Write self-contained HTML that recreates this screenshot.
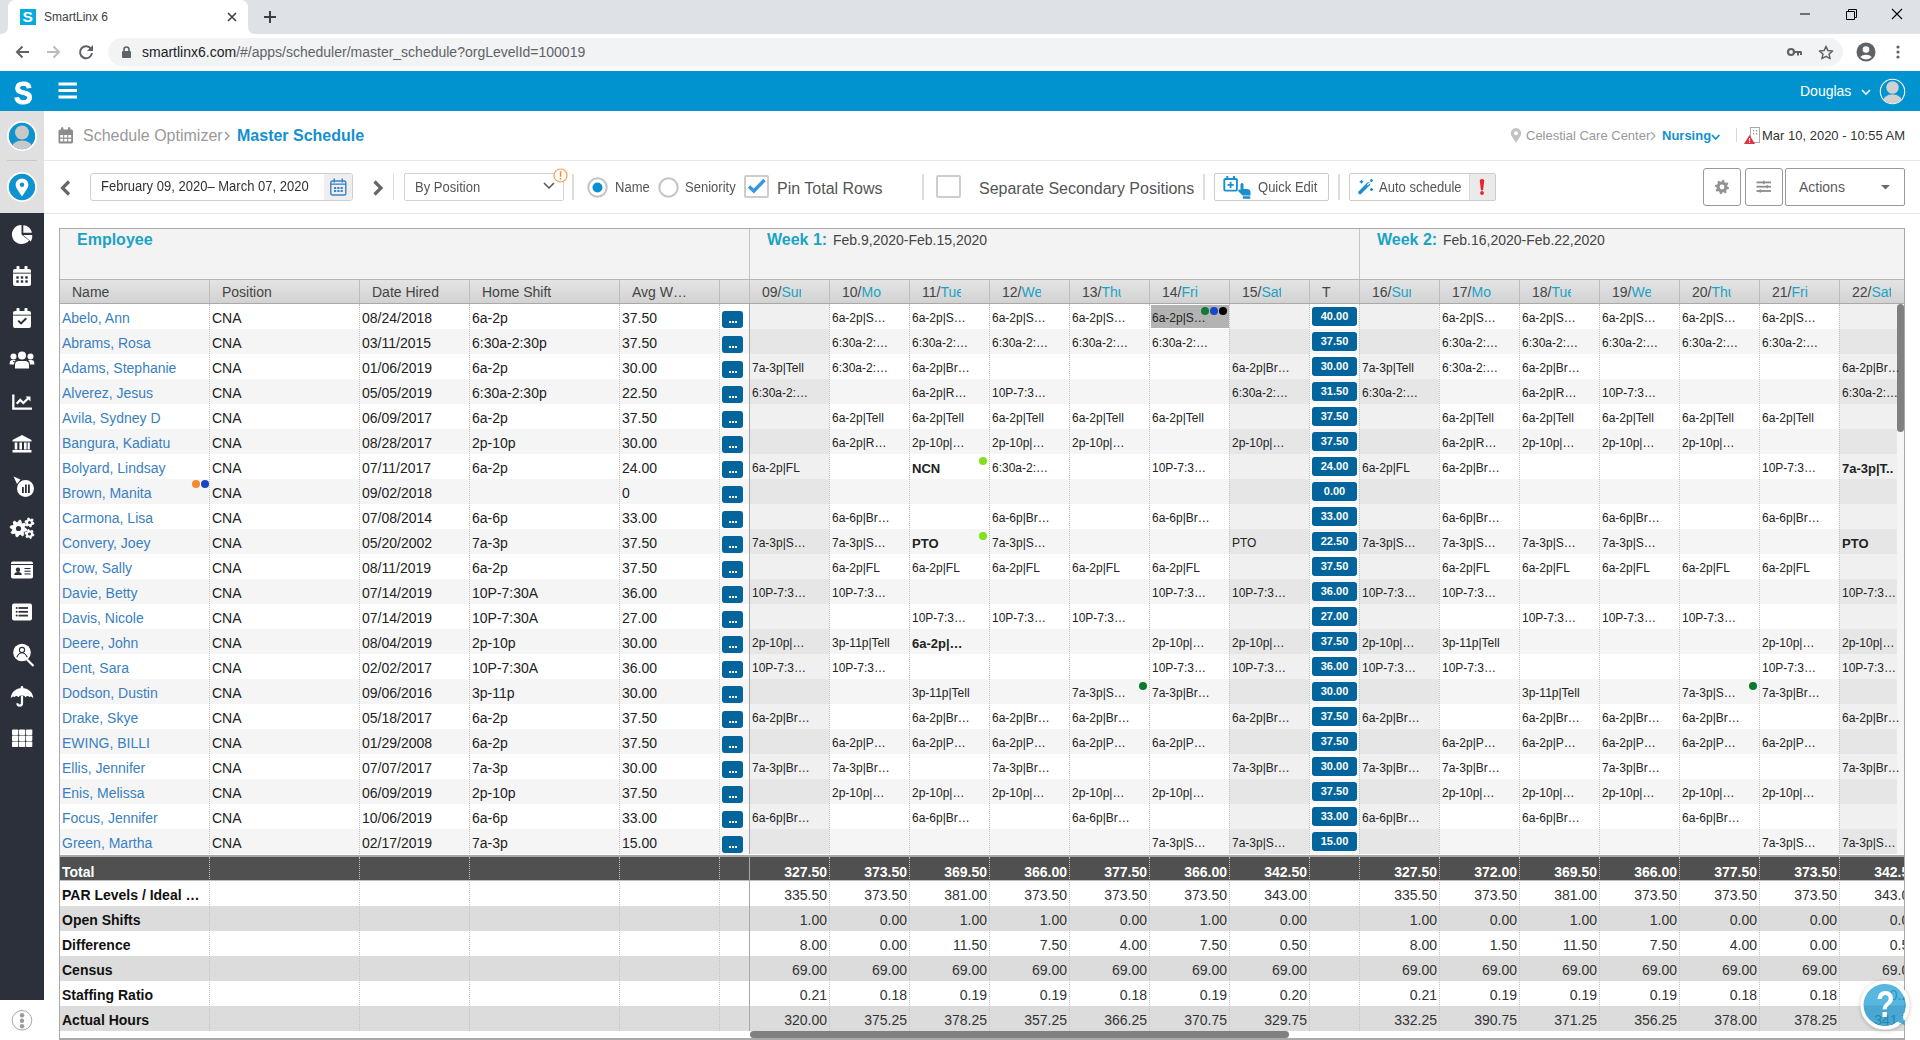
<!DOCTYPE html><html><head><meta charset="utf-8"><style>
*{box-sizing:border-box;margin:0;padding:0}
html,body{width:1920px;height:1040px;overflow:hidden;background:#fff;font-family:"Liberation Sans",sans-serif;color:#333;position:relative}
.a{position:absolute}
.t{position:absolute;white-space:nowrap;line-height:1}
svg{position:absolute;overflow:visible}
</style></head><body><div class="a" style="left:0;top:0;width:1920px;height:34px;background:#dee1e6"></div><svg style="left:0;top:0" width="260" height="34"><path d="M0 34 Q8 34 8 26 L8 8 Q8 0 16 0 L240 0 Q248 0 248 8 L248 26 Q248 34 256 34 Z" fill="#fff"/></svg><div class="a" style="left:20px;top:9px;width:16px;height:16px;background:#08abdf"></div><div class="t" style="left:22.5px;top:8.5px;font-size:15.5px;font-weight:bold;color:#fff">S</div><div class="t" style="left:44px;top:11px;font-size:12px;color:#3c4043">SmartLinx 6</div><svg style="left:228px;top:13px" width="8" height="8"><path d="M0 0L8 8M8 0L0 8" stroke="#3c4043" stroke-width="1.6"/></svg><svg style="left:264px;top:11px" width="12" height="12"><path d="M6 0V12M0 6H12" stroke="#3c4043" stroke-width="2"/></svg><svg style="left:1800px;top:13px" width="11" height="2"><path d="M0 1H10" stroke="#000" stroke-width="1"/></svg><svg style="left:1846px;top:9px" width="11" height="11"><path d="M0.5 2.5H8.5V10.5H0.5Z M2.5 2.5V0.5H10.5V8.5H8.5" fill="none" stroke="#000" stroke-width="1"/></svg><svg style="left:1892px;top:9px" width="11" height="11"><path d="M0 0L10 10M10 0L0 10" stroke="#000" stroke-width="1.1"/></svg><div class="a" style="left:0;top:34px;width:1920px;height:37px;background:#fff"></div><svg style="left:15px;top:45px" width="14" height="14"><path d="M14 7H2M7.5 1.5L2 7L7.5 12.5" fill="none" stroke="#5f6368" stroke-width="2"/></svg><svg style="left:47px;top:45px" width="14" height="14"><path d="M0 7H12M6.5 1.5L12 7L6.5 12.5" fill="none" stroke="#babcbe" stroke-width="2"/></svg><svg style="left:79px;top:45px" width="14" height="14"><path d="M12.2 4.2A6 6 0 1 0 13 8" fill="none" stroke="#5f6368" stroke-width="2"/><path d="M14 0V6H8Z" fill="#5f6368"/></svg><div class="a" style="left:108px;top:38px;width:1735px;height:28px;border-radius:14px;background:#f1f3f4"></div><svg style="left:122px;top:46px" width="9" height="12"><path d="M2 5V3.5A2.5 2.5 0 0 1 7 3.5V5" fill="none" stroke="#5f6368" stroke-width="1.6"/><rect x="0" y="5" width="9" height="7" rx="1" fill="#5f6368"/></svg><div class="t" style="left:142px;top:45px;font-size:14px;color:#202124">smartlinx6.com<span style="color:#5f6368">/#/apps/scheduler/master_schedule?orgLevelId=100019</span></div><svg style="left:1787px;top:47px" width="15" height="10"><circle cx="4" cy="5" r="3" fill="none" stroke="#5f6368" stroke-width="2.2"/><path d="M7 5H14.5M11 5V8.5M14 5V8" stroke="#5f6368" stroke-width="2"/></svg><svg style="left:1818px;top:45px" width="16" height="15"><path d="M8 1.2L9.9 5.6L14.6 6L11 9.1L12.1 13.7L8 11.3L3.9 13.7L5 9.1L1.4 6L6.1 5.6Z" fill="none" stroke="#5f6368" stroke-width="1.5" stroke-linejoin="round"/></svg><svg style="left:1856px;top:42px" width="20" height="20"><circle cx="10" cy="10" r="9.5" fill="#5f6368"/><circle cx="10" cy="7.5" r="3.3" fill="#fff"/><path d="M4.2 15A7 5 0 0 1 15.8 15A8 8 0 0 1 4.2 15Z" fill="#fff"/></svg><svg style="left:1896px;top:45px" width="4" height="14"><circle cx="2" cy="2" r="1.6" fill="#5f6368"/><circle cx="2" cy="7" r="1.6" fill="#5f6368"/><circle cx="2" cy="12" r="1.6" fill="#5f6368"/></svg><div class="a" style="left:0;top:71px;width:1920px;height:40px;background:#0093cf"></div><div class="t" style="left:13.8px;top:77.5px;font-size:31px;font-weight:bold;color:#fff;-webkit-text-stroke:0.9px #fff;transform:scaleX(0.9);transform-origin:0 0">S</div><svg style="left:58px;top:82px" width="20" height="17"><rect x="0.5" y="0.5" width="18.5" height="3" fill="#fff"/><rect x="0.5" y="7" width="18.5" height="3" fill="#fff"/><rect x="0.5" y="13.5" width="18.5" height="3" fill="#fff"/></svg><div class="t" style="left:1800px;top:84px;font-size:14px;color:#fff">Douglas</div><svg style="left:1861px;top:89px" width="10" height="7"><path d="M1 1L5 5L9 1" fill="none" stroke="#fff" stroke-width="1.6"/></svg><svg style="left:1879px;top:78px" width="27" height="27"><defs><clipPath id="avc"><circle cx="13.5" cy="13.5" r="12"/></clipPath></defs><circle cx="13.5" cy="13.5" r="12.2" fill="#0093cf" stroke="#fff" stroke-width="1.1"/><g clip-path="url(#avc)"><ellipse cx="13.5" cy="24.5" rx="10.5" ry="8.5" fill="#d0d0d0" stroke="#0093cf" stroke-width="0.7"/><circle cx="13.5" cy="9.5" r="6.3" fill="#d0d0d0"/></g></svg><div class="a" style="left:0;top:111px;width:44px;height:102px;background:#e0e0e0"></div><svg style="left:7px;top:121px" width="30" height="30"><defs><clipPath id="pc"><circle cx="15" cy="15" r="13.2"/></clipPath></defs><circle cx="15" cy="15" r="15" fill="#fff"/><circle cx="15" cy="15" r="13.2" fill="#0e93d1"/><g clip-path="url(#pc)"><ellipse cx="15" cy="28.5" rx="11.5" ry="9.5" fill="#c8c8c8" stroke="#0e93d1" stroke-width="0.8"/><circle cx="15" cy="11.5" r="7" fill="#c8c8c8"/></g></svg><div class="a" style="left:7px;top:160px;width:30px;height:1px;background:#c9c9c9"></div><svg style="left:7px;top:172px" width="30" height="30"><circle cx="15" cy="15" r="15" fill="#fff"/><circle cx="15" cy="15" r="13.2" fill="#0e93d1"/><path d="M15 24.5L9.6 16.3A6.4 6.4 0 1 1 20.4 16.3Z" fill="#fff"/><circle cx="15" cy="12.8" r="2.2" fill="#0e93d1"/></svg><div class="a" style="left:0;top:213px;width:44px;height:787px;background:#2b303b"></div><svg style="left:22px;top:234px" width="1" height="1"><path d="M-0.5 0.5L-0.5 -9.10A9.6 9.6 0 1 0 7.06 6.41Z" fill="#fff"/><path d="M1.3 -1.3L1.3 -8.80A9.0 9.0 0 0 1 9.90 -1.3Z" fill="#fff"/><path d="M1.2 0.9L10.20 0.9A9.2 9.2 0 0 1 8.85 7.51Z" fill="#fff"/></svg><svg style="left:22px;top:276px" width="1" height="1"><rect x="-9" y="-7" width="18" height="17" rx="2" fill="#fff"/><rect x="-5.5" y="-10" width="3" height="5" rx="0.8" fill="#fff"/><rect x="2.5" y="-10" width="3" height="5" rx="0.8" fill="#fff"/><rect x="-9" y="-3.3" width="18" height="0.9" fill="#2b303b"/><rect x="-5.7" y="0.3" width="2.4" height="2.4" fill="#2b303b"/><rect x="-1.2" y="0.3" width="2.4" height="2.4" fill="#2b303b"/><rect x="3.3" y="0.3" width="2.4" height="2.4" fill="#2b303b"/><rect x="-5.7" y="4.3" width="2.4" height="2.4" fill="#2b303b"/><rect x="-1.2" y="4.3" width="2.4" height="2.4" fill="#2b303b"/><rect x="3.3" y="4.3" width="2.4" height="2.4" fill="#2b303b"/></svg><svg style="left:22px;top:318px" width="1" height="1"><rect x="-9" y="-7" width="18" height="17" rx="2" fill="#fff"/><rect x="-5.5" y="-10" width="3" height="5" rx="0.8" fill="#fff"/><rect x="2.5" y="-10" width="3" height="5" rx="0.8" fill="#fff"/><rect x="-9" y="-3.3" width="18" height="0.9" fill="#2b303b"/><path d="M-3.8 2.6L-1 5.4L4.3 0.2" fill="none" stroke="#2b303b" stroke-width="2"/></svg><svg style="left:22px;top:360px" width="1" height="1"><circle cx="0" cy="-4.5" r="4" fill="#fff"/><circle cx="-8.5" cy="-3.5" r="3" fill="#fff"/><circle cx="8.5" cy="-3.5" r="3" fill="#fff"/><path d="M-7 8.5V5A4 4 0 0 1 -3 1H3A4 4 0 0 1 7 5V8.5Z" fill="#fff"/><path d="M-12.3 4.5V3A3 3 0 0 1 -9.3 0H-6.3A6 6 0 0 0 -8 4.5Z" fill="#fff"/><path d="M12.3 4.5V3A3 3 0 0 0 9.3 0H6.3A6 6 0 0 1 8 4.5Z" fill="#fff"/><path d="M-9 1.6L-7.4 1.6" stroke="#2b303b"/></svg><svg style="left:22px;top:402px" width="1" height="1"><path d="M-8.7 -7.5V6.6H10" fill="none" stroke="#fff" stroke-width="2.3"/><path d="M-5.3 1.8L-1.8 -2L1.3 1L6.5 -4" fill="none" stroke="#fff" stroke-width="2.3"/><path d="M3.5 -5.5H8.5V-0.5Z" fill="#fff"/></svg><svg style="left:22px;top:444px" width="1" height="1"><path d="M-9.5 -4L0 -9L9.5 -4V-2.5H-9.5Z" fill="#fff"/><rect x="-7.3" y="-1.5" width="2.6" height="7" fill="#fff"/><rect x="-2.6" y="-1.5" width="2.6" height="7" fill="#fff"/><rect x="2" y="-1.5" width="2.6" height="7" fill="#fff"/><rect x="5.6" y="-1.5" width="2.2" height="7" fill="#fff"/><rect x="-9.5" y="6" width="19" height="2.5" rx="0.5" fill="#fff"/></svg><svg style="left:22px;top:486px" width="1" height="1"><circle cx="3.5" cy="2.5" r="8.5" fill="#fff"/><rect x="0" y="1" width="1.8" height="6" fill="#2b303b"/><rect x="3" y="-1.5" width="1.8" height="8.5" fill="#2b303b"/><rect x="6" y="-1.5" width="1.8" height="8.5" fill="#2b303b"/><path d="M-8.5 -9.5L-1.5 -6.5L-5 -2Z" fill="#fff"/></svg><svg style="left:22px;top:528px" width="1" height="1"><polygon points="4.86,1.32 4.54,2.94 1.97,3.42 1.29,4.43 1.83,6.99 0.46,7.91 -1.70,6.43 -2.89,6.67 -4.32,8.86 -5.94,8.54 -6.42,5.97 -7.43,5.29 -9.99,5.83 -10.91,4.46 -9.43,2.30 -9.67,1.11 -11.86,-0.32 -11.54,-1.94 -8.97,-2.42 -8.29,-3.43 -8.83,-5.99 -7.46,-6.91 -5.30,-5.43 -4.11,-5.67 -2.68,-7.86 -1.06,-7.54 -0.58,-4.97 0.43,-4.29 2.99,-4.83 3.91,-3.46 2.43,-1.30 2.67,-0.11" fill="#fff" stroke="#fff" stroke-width="0.8" stroke-linejoin="round"/><circle cx="-3.5" cy="0.5" r="2.6" fill="#2b303b"/><polygon points="12.06,-4.90 11.75,-3.74 10.12,-3.49 9.51,-2.88 9.26,-1.25 8.10,-0.94 7.07,-2.23 6.24,-2.45 4.70,-1.85 3.85,-2.70 4.45,-4.24 4.23,-5.07 2.94,-6.10 3.25,-7.26 4.88,-7.51 5.49,-8.12 5.74,-9.75 6.90,-10.06 7.93,-8.77 8.76,-8.55 10.30,-9.15 11.15,-8.30 10.55,-6.76 10.77,-5.93" fill="#fff" stroke="#fff" stroke-width="0.8" stroke-linejoin="round"/><circle cx="7.5" cy="-5.5" r="1.5" fill="#2b303b"/><polygon points="12.06,6.60 11.75,7.76 10.12,8.01 9.51,8.62 9.26,10.25 8.10,10.56 7.07,9.27 6.24,9.05 4.70,9.65 3.85,8.80 4.45,7.26 4.23,6.43 2.94,5.40 3.25,4.24 4.88,3.99 5.49,3.38 5.74,1.75 6.90,1.44 7.93,2.73 8.76,2.95 10.30,2.35 11.15,3.20 10.55,4.74 10.77,5.57" fill="#fff" stroke="#fff" stroke-width="0.8" stroke-linejoin="round"/><circle cx="7.5" cy="6" r="1.5" fill="#2b303b"/></svg><svg style="left:22px;top:570px" width="1" height="1"><rect x="-11" y="-8.5" width="22" height="17" rx="1.8" fill="#fff"/><rect x="-11" y="-6" width="22" height="1" fill="#2b303b"/><circle cx="-4" cy="-0.3" r="2.2" fill="#2b303b"/><path d="M-7.8 5A3.8 3 0 0 1 -0.2 5Z" fill="#2b303b"/><rect x="2.5" y="-2" width="6" height="1.1" fill="#2b303b"/><rect x="2.5" y="0.7" width="6" height="1.1" fill="#2b303b"/><rect x="2.5" y="3.4" width="6" height="1.1" fill="#2b303b"/></svg><svg style="left:22px;top:612px" width="1" height="1"><rect x="-10" y="-8.5" width="20" height="17" rx="2" fill="#fff"/><circle cx="-5.3" cy="-4.0" r="1" fill="#2b303b"/><rect x="-3.5" y="-4.9" width="9.5" height="1.8" fill="#2b303b"/><circle cx="-5.3" cy="-0.2" r="1" fill="#2b303b"/><rect x="-3.5" y="-1.1" width="9.5" height="1.8" fill="#2b303b"/><circle cx="-5.3" cy="3.6" r="1" fill="#2b303b"/><rect x="-3.5" y="2.7" width="9.5" height="1.8" fill="#2b303b"/></svg><svg style="left:22px;top:654px" width="1" height="1"><circle cx="0" cy="-1.5" r="8.8" fill="#fff"/><circle cx="0" cy="-4" r="2.6" fill="none" stroke="#2b303b" stroke-width="1.1"/><path d="M-5.3 3.3Q-3 -1.2 0 -1.2Q3 -1.2 5.3 3.3" fill="none" stroke="#2b303b" stroke-width="1.1"/><path d="M5 5.5L11.5 12" stroke="#fff" stroke-width="2.2"/></svg><svg style="left:22px;top:696px" width="1" height="1"><path d="M-11.2 2.5A11.2 10.5 0 0 1 11.2 2.5Q9.5 -0.5 7.5 1Q5.5 -1 3.7 1.2Q2 -1.3 0 -0.3Q-2 -1.3 -3.7 1.2Q-5.5 -1 -7.5 1Q-9.5 -0.5 -11.2 2.5Z" fill="#fff"/><path d="M0 0V7.3A2.3 2.3 0 0 1 -4.6 7.3" fill="none" stroke="#fff" stroke-width="2.2"/><circle cx="0" cy="-8.6" r="1.3" fill="#fff"/></svg><svg style="left:22px;top:738px" width="1" height="1"><rect x="-10" y="-8.5" width="6.3" height="5.5" rx="0.8" fill="#fff"/><rect x="-3" y="-8.5" width="6.3" height="5.5" rx="0.8" fill="#fff"/><rect x="4" y="-8.5" width="6.3" height="5.5" rx="0.8" fill="#fff"/><rect x="-10" y="-2.5" width="6.3" height="5.5" rx="0.8" fill="#fff"/><rect x="-3" y="-2.5" width="6.3" height="5.5" rx="0.8" fill="#fff"/><rect x="4" y="-2.5" width="6.3" height="5.5" rx="0.8" fill="#fff"/><rect x="-10" y="3.5" width="6.3" height="5.5" rx="0.8" fill="#fff"/><rect x="-3" y="3.5" width="6.3" height="5.5" rx="0.8" fill="#fff"/><rect x="4" y="3.5" width="6.3" height="5.5" rx="0.8" fill="#fff"/></svg><svg style="left:11px;top:1009px" width="22" height="22"><circle cx="11" cy="11.3" r="9.8" fill="#fff" stroke="#a9a9a9" stroke-width="1"/><circle cx="11" cy="6.3" r="2.2" fill="#9c9c9c"/><circle cx="11" cy="11.8" r="2.2" fill="#9c9c9c"/><circle cx="11" cy="17.3" r="2.2" fill="#9c9c9c"/></svg><svg style="left:58px;top:127px" width="16" height="17"><rect x="0.5" y="2.5" width="14.5" height="14" rx="1.5" fill="#8c8c8c"/><rect x="3" y="0.3" width="2.4" height="4" rx="0.6" fill="#8c8c8c"/><rect x="10" y="0.3" width="2.4" height="4" rx="0.6" fill="#8c8c8c"/><rect x="2.2" y="8.0" width="3" height="2.6" fill="#fff"/><rect x="6.2" y="8.0" width="3" height="2.6" fill="#fff"/><rect x="10.2" y="8.0" width="3" height="2.6" fill="#fff"/><rect x="2.2" y="11.8" width="3" height="2.6" fill="#fff"/><rect x="6.2" y="11.8" width="3" height="2.6" fill="#fff"/><rect x="10.2" y="11.8" width="3" height="2.6" fill="#fff"/></svg><div class="t" style="left:83px;top:128px;font-size:16px;color:#999">Schedule Optimizer</div><svg style="left:224px;top:131px" width="7" height="10"><path d="M1 1L5 5L1 9" fill="none" stroke="#999" stroke-width="1.4"/></svg><div class="t" style="left:237px;top:128px;font-size:16px;font-weight:bold;color:#1490d0">Master Schedule</div><svg style="left:1510px;top:128px" width="12" height="15"><path d="M6 15L1.3 7.5A5.2 5.2 0 1 1 10.7 7.5Z" fill="#c2c2c2"/><circle cx="6" cy="5.3" r="2" fill="#fff"/></svg><div class="t" style="left:1526px;top:129px;font-size:13px;color:#999">Celestial Care Center</div><svg style="left:1650px;top:131px" width="7" height="10"><path d="M1 1L5 5L1 9" fill="none" stroke="#aaa" stroke-width="1.3"/></svg><div class="t" style="left:1662px;top:129px;font-size:13px;font-weight:bold;color:#1490d0">Nursing</div><svg style="left:1711px;top:134px" width="10" height="7"><path d="M1 1L4.7 5L8.4 1" fill="none" stroke="#1490d0" stroke-width="1.8"/></svg><div class="a" style="left:1736px;top:128px;width:1px;height:14px;background:#d8d8d8"></div><svg style="left:1744px;top:127px" width="18" height="18"><rect x="6.5" y="0.5" width="9" height="15" fill="#fff" stroke="#aaa" stroke-width="1"/><rect x="9" y="3" width="1.2" height="1.5" fill="#999"/><rect x="12" y="3" width="1.2" height="1.5" fill="#999"/><rect x="9" y="6" width="1.2" height="1.5" fill="#999"/><rect x="12" y="6" width="1.2" height="1.5" fill="#999"/><path d="M5.5 8L11 17H0Z" fill="#e0353f"/><rect x="5" y="11" width="1.1" height="3.2" fill="#fff"/><rect x="5" y="14.8" width="1.1" height="1.1" fill="#fff"/></svg><div class="t" style="left:1762px;top:129px;font-size:13px;color:#333">Mar 10, 2020 - 10:55 AM</div><div class="a" style="left:44px;top:160px;width:1876px;height:1px;background:#e6e6e6"></div><div class="a" style="left:44px;top:213px;width:1876px;height:1px;background:#e6e6e6"></div><svg style="left:59px;top:180px" width="13" height="16"><path d="M10 1.5L3.5 8L10 14.5" fill="none" stroke="#666" stroke-width="3.2"/></svg><svg style="left:372px;top:180px" width="13" height="16"><path d="M2.5 1.5L9 8L2.5 14.5" fill="none" stroke="#666" stroke-width="3.2"/></svg><div class="a" style="left:90px;top:173px;width:263px;height:28px;border:1px solid #cfcfcf;border-radius:3px;background:#fff"></div><div class="a" style="left:324px;top:174px;width:28px;height:26px;background:#eee;border-radius:0 2px 2px 0"></div><svg style="left:330px;top:178px" width="17" height="18"><rect x="0.8" y="3" width="15" height="14" rx="1.5" fill="none" stroke="#3b82c8" stroke-width="1.4"/><rect x="3.5" y="0.5" width="1.5" height="4" fill="#3b82c8"/><rect x="11.5" y="0.5" width="1.5" height="4" fill="#3b82c8"/><rect x="0.8" y="5.5" width="15" height="1.3" fill="#3b82c8"/><rect x="4.0" y="9.0" width="2.2" height="2" fill="#3b82c8"/><rect x="7.3" y="9.0" width="2.2" height="2" fill="#3b82c8"/><rect x="10.6" y="9.0" width="2.2" height="2" fill="#3b82c8"/><rect x="4.0" y="12.0" width="2.2" height="2" fill="#3b82c8"/><rect x="7.3" y="12.0" width="2.2" height="2" fill="#3b82c8"/><rect x="10.6" y="12.0" width="2.2" height="2" fill="#3b82c8"/></svg><div class="t" style="left:101px;top:179px;font-size:14px;color:#333;transform:scaleX(0.93);transform-origin:0 0">February 09, 2020– March 07, 2020</div><div class="a" style="left:393px;top:174px;width:1px;height:26px;background:#ddd"></div><div class="a" style="left:404px;top:173px;width:160px;height:28px;border:1px solid #d3d3d3;border-radius:2px;background:#fff"></div><div class="t" style="left:415px;top:180px;font-size:14px;color:#555;transform:scaleX(0.93);transform-origin:0 0">By Position</div><svg style="left:543px;top:182px" width="12" height="8"><path d="M1 1L6 6L11 1" fill="none" stroke="#555" stroke-width="1.5"/></svg><svg style="left:553px;top:168px" width="15" height="15"><circle cx="7.5" cy="7.5" r="6.5" fill="#fff" stroke="#f5a04a" stroke-width="1.2"/><rect x="6.8" y="3.3" width="1.5" height="5.5" fill="#f08a24"/><rect x="6.8" y="10" width="1.5" height="1.5" fill="#f08a24"/></svg><div class="a" style="left:572px;top:174px;width:2px;height:26px;background:#ddd"></div><svg style="left:587px;top:177px" width="21" height="21"><circle cx="10.5" cy="10.5" r="9.2" fill="#fff" stroke="#c4c4c4" stroke-width="2"/><circle cx="10.5" cy="10.5" r="5" fill="#0a8fd0"/></svg><div class="t" style="left:615px;top:180px;font-size:14px;color:#555;transform:scaleX(0.93);transform-origin:0 0">Name</div><svg style="left:658px;top:177px" width="21" height="21"><circle cx="10.5" cy="10.5" r="9.2" fill="#fff" stroke="#c4c4c4" stroke-width="2"/></svg><div class="t" style="left:685px;top:180px;font-size:14px;color:#555;transform:scaleX(0.93);transform-origin:0 0">Seniority</div><div class="a" style="left:744px;top:175px;width:25px;height:23px;border:2px solid #cdcdcd;border-radius:2px;background:#fff"></div><svg style="left:747px;top:178px" width="20" height="16"><path d="M2 8.5L6.8 13L17.5 2" fill="none" stroke="#3a96de" stroke-width="3.4"/></svg><div class="t" style="left:777px;top:181px;font-size:16px;color:#555">Pin Total Rows</div><div class="a" style="left:922px;top:174px;width:2px;height:26px;background:#ddd"></div><div class="a" style="left:936px;top:175px;width:25px;height:23px;border:2px solid #cdcdcd;border-radius:2px;background:#fff"></div><div class="t" style="left:979px;top:181px;font-size:16px;color:#555">Separate Secondary Positions</div><div class="a" style="left:1203px;top:174px;width:2px;height:26px;background:#ddd"></div><div class="a" style="left:1214px;top:173px;width:115px;height:28px;border:1px solid #ccc;border-radius:2px;background:#fff"></div><svg style="left:1222px;top:175px" width="32" height="24"><rect x="2.3" y="4" width="12.6" height="11.6" rx="1" fill="none" stroke="#1a8fd0" stroke-width="1.9"/><rect x="4.3" y="1" width="2" height="4" fill="#1a8fd0"/><rect x="11" y="1" width="2" height="4" fill="#1a8fd0"/><path d="M8.6 6.8V13M5.5 9.9H11.7" stroke="#1a8fd0" stroke-width="1.8"/><path d="M18.5 9.5Q18.5 8 20 8Q21.5 8 21.5 9.5V14H25Q28.5 14 28.5 17.5V20.5H20.5L16.5 16.5Q15.8 15.5 16.8 14.8Q17.6 14.3 18.5 15Z" fill="#1a8fd0"/><rect x="20.8" y="21.2" width="7.5" height="2.6" rx="0.5" fill="#1a8fd0"/></svg><div class="t" style="left:1258px;top:180px;font-size:14px;color:#555;transform:scaleX(0.93);transform-origin:0 0">Quick Edit</div><div class="a" style="left:1338px;top:174px;width:2px;height:26px;background:#ddd"></div><div class="a" style="left:1349px;top:173px;width:147px;height:28px;border:1px solid #ccc;border-radius:2px;background:#fff"></div><div class="a" style="left:1469px;top:174px;width:26px;height:26px;background:#eaeaea;border-left:1px solid #d8d8d8"></div><svg style="left:1357px;top:178px" width="18" height="18"><path d="M3 14.5L11.5 6" stroke="#1a8fd0" stroke-width="3.6" stroke-linecap="round"/><path d="M10.3 7.2L12.8 4.7" stroke="#fff" stroke-width="1.2"/><path d="M4.5 2V5.5M2.75 3.75H6.25M14.5 1V4M13 2.5H16M14.5 10V13M13 11.5H16" stroke="#1a8fd0" stroke-width="1.3"/></svg><div class="t" style="left:1379px;top:180px;font-size:14px;color:#555;transform:scaleX(0.93);transform-origin:0 0">Auto schedule</div><svg style="left:1478px;top:178px" width="8" height="18"><path d="M1.8 2.5Q1.8 1 4 1Q6.2 1 6.2 2.5L5.2 11.5Q5 12.5 4 12.5Q3 12.5 2.8 11.5Z" fill="#e8232f"/><circle cx="4" cy="15" r="1.9" fill="#e8232f"/></svg><div class="a" style="left:1703px;top:168px;width:38px;height:38px;border:1px solid #999;border-radius:3px;background:#fff"></div><svg style="left:1714px;top:179px" width="16" height="16"><polygon points="15.17,8.71 14.89,10.09 12.76,10.55 12.17,11.43 12.57,13.57 11.39,14.35 9.57,13.17 8.53,13.37 7.29,15.17 5.91,14.89 5.45,12.76 4.57,12.17 2.43,12.57 1.65,11.39 2.83,9.57 2.63,8.53 0.83,7.29 1.11,5.91 3.24,5.45 3.83,4.57 3.43,2.43 4.61,1.65 6.43,2.83 7.47,2.63 8.71,0.83 10.09,1.11 10.55,3.24 11.43,3.83 13.57,3.43 14.35,4.61 13.17,6.43 13.37,7.47" fill="#929292"/><circle cx="8" cy="8" r="2.4" fill="#fff"/></svg><div class="a" style="left:1745px;top:168px;width:38px;height:38px;border:1px solid #999;border-radius:3px;background:#fff"></div><svg style="left:1756px;top:180px" width="16" height="14"><rect x="0.5" y="1.5" width="14.5" height="1.8" fill="#8c8c8c"/><rect x="0.5" y="5.8" width="14.5" height="1.8" fill="#8c8c8c"/><rect x="0.5" y="10.1" width="14.5" height="1.8" fill="#8c8c8c"/><rect x="7" y="0.6" width="1.6" height="3.6" rx="0.8" fill="#8c8c8c"/><rect x="10.5" y="4.9" width="1.6" height="3.6" rx="0.8" fill="#8c8c8c"/><rect x="3.5" y="9.2" width="1.6" height="3.6" rx="0.8" fill="#8c8c8c"/></svg><div class="a" style="left:1785px;top:168px;width:120px;height:38px;border:1px solid #999;border-radius:2px;background:#fff"></div><div class="t" style="left:1799px;top:180px;font-size:14px;color:#5a5a5a">Actions</div><svg style="left:1881px;top:185px" width="9" height="5"><path d="M0 0H9L4.5 4.5Z" fill="#6a6a6a"/></svg><div class="a" style="left:59px;top:228px;width:1846px;height:812px;overflow:hidden;border:1px solid #aaa;border-bottom-width:2px;background:#fff"><div class="a" style="left:-1px;top:-1px;width:1846px;height:51px;background:#f3f3f3"></div><div class="a" style="left:-1px;top:50px;width:1846px;height:1px;background:#b4b4b4"></div><div class="a" style="left:689px;top:-1px;width:1px;height:51px;background:#c4c4c4"></div><div class="a" style="left:1299px;top:-1px;width:1px;height:51px;background:#c4c4c4"></div><div class="t" style="left:17px;top:3px;font-size:16px;font-weight:bold;color:#1ba3c4">Employee</div><div class="t" style="left:707px;top:3px;font-size:16px;font-weight:bold;color:#1ba3c4">Week 1:</div><div class="t" style="left:773px;top:4px;font-size:14px;color:#444">Feb.9,2020-Feb.15,2020</div><div class="t" style="left:1317px;top:3px;font-size:16px;font-weight:bold;color:#1ba3c4">Week 2:</div><div class="t" style="left:1383px;top:4px;font-size:14px;color:#444">Feb.16,2020-Feb.22,2020</div><div class="a" style="left:-1px;top:51px;width:1846px;height:23px;background:linear-gradient(#e4e4e4,#d2d2d2)"></div><div class="a" style="left:-1px;top:74px;width:1846px;height:1px;background:#a9a9a9"></div><div class="a" style="left:149px;top:51px;width:1px;height:23px;background:#bdbdbd"></div><div class="a" style="left:299px;top:51px;width:1px;height:23px;background:#bdbdbd"></div><div class="a" style="left:409px;top:51px;width:1px;height:23px;background:#bdbdbd"></div><div class="a" style="left:559px;top:51px;width:1px;height:23px;background:#bdbdbd"></div><div class="a" style="left:659px;top:51px;width:1px;height:23px;background:#bdbdbd"></div><div class="a" style="left:689px;top:51px;width:1px;height:23px;background:#bdbdbd"></div><div class="a" style="left:769px;top:51px;width:1px;height:23px;background:#bdbdbd"></div><div class="a" style="left:849px;top:51px;width:1px;height:23px;background:#bdbdbd"></div><div class="a" style="left:929px;top:51px;width:1px;height:23px;background:#bdbdbd"></div><div class="a" style="left:1009px;top:51px;width:1px;height:23px;background:#bdbdbd"></div><div class="a" style="left:1089px;top:51px;width:1px;height:23px;background:#bdbdbd"></div><div class="a" style="left:1169px;top:51px;width:1px;height:23px;background:#bdbdbd"></div><div class="a" style="left:1249px;top:51px;width:1px;height:23px;background:#bdbdbd"></div><div class="a" style="left:1299px;top:51px;width:1px;height:23px;background:#bdbdbd"></div><div class="a" style="left:1379px;top:51px;width:1px;height:23px;background:#bdbdbd"></div><div class="a" style="left:1459px;top:51px;width:1px;height:23px;background:#bdbdbd"></div><div class="a" style="left:1539px;top:51px;width:1px;height:23px;background:#bdbdbd"></div><div class="a" style="left:1619px;top:51px;width:1px;height:23px;background:#bdbdbd"></div><div class="a" style="left:1699px;top:51px;width:1px;height:23px;background:#bdbdbd"></div><div class="a" style="left:1779px;top:51px;width:1px;height:23px;background:#bdbdbd"></div><div class="a" style="left:1859px;top:51px;width:1px;height:23px;background:#bdbdbd"></div><div class="t" style="left:12px;top:56px;font-size:14px;color:#444">Name</div><div class="t" style="left:162px;top:56px;font-size:14px;color:#444">Position</div><div class="t" style="left:312px;top:56px;font-size:14px;color:#444">Date Hired</div><div class="t" style="left:422px;top:56px;font-size:14px;color:#444">Home Shift</div><div class="t" style="left:572px;top:56px;font-size:14px;color:#444">Avg W…</div><div class="t" style="left:702px;top:56px;width:39px;overflow:hidden;font-size:14px;color:#444">09/<span style="color:#1ba3c4">Sun</span></div><div class="t" style="left:782px;top:56px;width:39px;overflow:hidden;font-size:14px;color:#444">10/<span style="color:#1ba3c4">Mon</span></div><div class="t" style="left:862px;top:56px;width:39px;overflow:hidden;font-size:14px;color:#444">11/<span style="color:#1ba3c4">Tue</span></div><div class="t" style="left:942px;top:56px;width:39px;overflow:hidden;font-size:14px;color:#444">12/<span style="color:#1ba3c4">Wed</span></div><div class="t" style="left:1022px;top:56px;width:39px;overflow:hidden;font-size:14px;color:#444">13/<span style="color:#1ba3c4">Thu</span></div><div class="t" style="left:1102px;top:56px;width:39px;overflow:hidden;font-size:14px;color:#444">14/<span style="color:#1ba3c4">Fri</span></div><div class="t" style="left:1182px;top:56px;width:39px;overflow:hidden;font-size:14px;color:#444">15/<span style="color:#1ba3c4">Sat</span></div><div class="t" style="left:1312px;top:56px;width:39px;overflow:hidden;font-size:14px;color:#444">16/<span style="color:#1ba3c4">Sun</span></div><div class="t" style="left:1392px;top:56px;width:39px;overflow:hidden;font-size:14px;color:#444">17/<span style="color:#1ba3c4">Mon</span></div><div class="t" style="left:1472px;top:56px;width:39px;overflow:hidden;font-size:14px;color:#444">18/<span style="color:#1ba3c4">Tue</span></div><div class="t" style="left:1552px;top:56px;width:39px;overflow:hidden;font-size:14px;color:#444">19/<span style="color:#1ba3c4">Wed</span></div><div class="t" style="left:1632px;top:56px;width:39px;overflow:hidden;font-size:14px;color:#444">20/<span style="color:#1ba3c4">Thu</span></div><div class="t" style="left:1712px;top:56px;width:39px;overflow:hidden;font-size:14px;color:#444">21/<span style="color:#1ba3c4">Fri</span></div><div class="t" style="left:1792px;top:56px;width:39px;overflow:hidden;font-size:14px;color:#444">22/<span style="color:#1ba3c4">Sat</span></div><div class="t" style="left:1262px;top:56px;font-size:14px;color:#444">T</div><div class="a" style="left:-1px;top:75px;width:1838px;height:25px;background:#fff"></div><div class="a" style="left:-1px;top:100px;width:1838px;height:25px;background:#f5f5f5"></div><div class="a" style="left:-1px;top:125px;width:1838px;height:25px;background:#fff"></div><div class="a" style="left:-1px;top:150px;width:1838px;height:25px;background:#f5f5f5"></div><div class="a" style="left:-1px;top:175px;width:1838px;height:25px;background:#fff"></div><div class="a" style="left:-1px;top:200px;width:1838px;height:25px;background:#f5f5f5"></div><div class="a" style="left:-1px;top:225px;width:1838px;height:25px;background:#fff"></div><div class="a" style="left:-1px;top:250px;width:1838px;height:25px;background:#f5f5f5"></div><div class="a" style="left:-1px;top:275px;width:1838px;height:25px;background:#fff"></div><div class="a" style="left:-1px;top:300px;width:1838px;height:25px;background:#f5f5f5"></div><div class="a" style="left:-1px;top:325px;width:1838px;height:25px;background:#fff"></div><div class="a" style="left:-1px;top:350px;width:1838px;height:25px;background:#f5f5f5"></div><div class="a" style="left:-1px;top:375px;width:1838px;height:25px;background:#fff"></div><div class="a" style="left:-1px;top:400px;width:1838px;height:25px;background:#f5f5f5"></div><div class="a" style="left:-1px;top:425px;width:1838px;height:25px;background:#fff"></div><div class="a" style="left:-1px;top:450px;width:1838px;height:25px;background:#f5f5f5"></div><div class="a" style="left:-1px;top:475px;width:1838px;height:25px;background:#fff"></div><div class="a" style="left:-1px;top:500px;width:1838px;height:25px;background:#f5f5f5"></div><div class="a" style="left:-1px;top:525px;width:1838px;height:25px;background:#fff"></div><div class="a" style="left:-1px;top:550px;width:1838px;height:25px;background:#f5f5f5"></div><div class="a" style="left:-1px;top:575px;width:1838px;height:25px;background:#fff"></div><div class="a" style="left:-1px;top:600px;width:1838px;height:25px;background:#f5f5f5"></div><div class="a" style="left:689px;top:75px;width:80px;height:550px;background:rgba(0,0,0,0.06)"></div><div class="a" style="left:1169px;top:75px;width:80px;height:550px;background:rgba(0,0,0,0.06)"></div><div class="a" style="left:1299px;top:75px;width:80px;height:550px;background:rgba(0,0,0,0.06)"></div><div class="a" style="left:1779px;top:75px;width:80px;height:550px;background:rgba(0,0,0,0.06)"></div><div class="a" style="left:1091px;top:76px;width:78px;height:23px;background:#b3b3b3"></div><div class="a" style="left:149px;top:75px;width:1px;height:550px;border-left:1px dotted #c2c2c2"></div><div class="a" style="left:299px;top:75px;width:1px;height:550px;border-left:1px dotted #c2c2c2"></div><div class="a" style="left:409px;top:75px;width:1px;height:550px;border-left:1px dotted #c2c2c2"></div><div class="a" style="left:559px;top:75px;width:1px;height:550px;border-left:1px dotted #c2c2c2"></div><div class="a" style="left:659px;top:75px;width:1px;height:550px;border-left:1px dotted #c2c2c2"></div><div class="a" style="left:689px;top:75px;width:1px;height:550px;background:#a8a8a8"></div><div class="a" style="left:769px;top:75px;width:1px;height:550px;border-left:1px dotted #c2c2c2"></div><div class="a" style="left:849px;top:75px;width:1px;height:550px;border-left:1px dotted #c2c2c2"></div><div class="a" style="left:929px;top:75px;width:1px;height:550px;border-left:1px dotted #c2c2c2"></div><div class="a" style="left:1009px;top:75px;width:1px;height:550px;border-left:1px dotted #c2c2c2"></div><div class="a" style="left:1089px;top:75px;width:1px;height:550px;border-left:1px dotted #c2c2c2"></div><div class="a" style="left:1169px;top:75px;width:1px;height:550px;border-left:1px dotted #c2c2c2"></div><div class="a" style="left:1249px;top:75px;width:1px;height:550px;border-left:1px dotted #c2c2c2"></div><div class="a" style="left:1299px;top:75px;width:1px;height:550px;border-left:1px dotted #c2c2c2"></div><div class="a" style="left:1379px;top:75px;width:1px;height:550px;border-left:1px dotted #c2c2c2"></div><div class="a" style="left:1459px;top:75px;width:1px;height:550px;border-left:1px dotted #c2c2c2"></div><div class="a" style="left:1539px;top:75px;width:1px;height:550px;border-left:1px dotted #c2c2c2"></div><div class="a" style="left:1619px;top:75px;width:1px;height:550px;border-left:1px dotted #c2c2c2"></div><div class="a" style="left:1699px;top:75px;width:1px;height:550px;border-left:1px dotted #c2c2c2"></div><div class="a" style="left:1779px;top:75px;width:1px;height:550px;border-left:1px dotted #c2c2c2"></div><div class="a" style="left:1837px;top:75px;width:8px;height:550px;background:#f5f5f5"></div><div class="a" style="left:1837px;top:75px;width:7px;height:128px;background:#808080;border-radius:3.5px"></div><div class="t" style="left:2px;top:82px;font-size:14px;color:#3a7fc1">Abelo, Ann</div><div class="t" style="left:152px;top:82px;font-size:14px;color:#222">CNA</div><div class="t" style="left:302px;top:82px;font-size:14px;color:#222">08/24/2018</div><div class="t" style="left:412px;top:82px;font-size:14px;color:#222">6a-2p</div><div class="t" style="left:562px;top:82px;font-size:14px;color:#222">37.50</div><div class="a" style="left:662px;top:82px;width:21px;height:17px;background:#03659b;border-radius:3px"></div><div class="a" style="left:669px;top:92px;width:2px;height:2px;background:#fff"></div><div class="a" style="left:672px;top:92px;width:2px;height:2px;background:#fff"></div><div class="a" style="left:675px;top:92px;width:2px;height:2px;background:#fff"></div><div class="a" style="left:1252px;top:78px;width:45px;height:19px;background:#03659b;border-radius:3px"></div><div class="t" style="left:1252px;top:82px;width:45px;text-align:center;font-size:11px;font-weight:bold;color:#fff">40.00</div><div class="t" style="left:772px;top:83px;font-size:12px;color:#222">6a-2p|S…</div><div class="t" style="left:852px;top:83px;font-size:12px;color:#222">6a-2p|S…</div><div class="t" style="left:932px;top:83px;font-size:12px;color:#222">6a-2p|S…</div><div class="t" style="left:1012px;top:83px;font-size:12px;color:#222">6a-2p|S…</div><div class="t" style="left:1092px;top:83px;font-size:12px;color:#222">6a-2p|S…</div><div class="t" style="left:1382px;top:83px;font-size:12px;color:#222">6a-2p|S…</div><div class="t" style="left:1462px;top:83px;font-size:12px;color:#222">6a-2p|S…</div><div class="t" style="left:1542px;top:83px;font-size:12px;color:#222">6a-2p|S…</div><div class="t" style="left:1622px;top:83px;font-size:12px;color:#222">6a-2p|S…</div><div class="t" style="left:1702px;top:83px;font-size:12px;color:#222">6a-2p|S…</div><div class="t" style="left:2px;top:107px;font-size:14px;color:#3a7fc1">Abrams, Rosa</div><div class="t" style="left:152px;top:107px;font-size:14px;color:#222">CNA</div><div class="t" style="left:302px;top:107px;font-size:14px;color:#222">03/11/2015</div><div class="t" style="left:412px;top:107px;font-size:14px;color:#222">6:30a-2:30p</div><div class="t" style="left:562px;top:107px;font-size:14px;color:#222">37.50</div><div class="a" style="left:662px;top:107px;width:21px;height:17px;background:#03659b;border-radius:3px"></div><div class="a" style="left:669px;top:117px;width:2px;height:2px;background:#fff"></div><div class="a" style="left:672px;top:117px;width:2px;height:2px;background:#fff"></div><div class="a" style="left:675px;top:117px;width:2px;height:2px;background:#fff"></div><div class="a" style="left:1252px;top:103px;width:45px;height:19px;background:#03659b;border-radius:3px"></div><div class="t" style="left:1252px;top:107px;width:45px;text-align:center;font-size:11px;font-weight:bold;color:#fff">37.50</div><div class="t" style="left:772px;top:108px;font-size:12px;color:#222">6:30a-2:…</div><div class="t" style="left:852px;top:108px;font-size:12px;color:#222">6:30a-2:…</div><div class="t" style="left:932px;top:108px;font-size:12px;color:#222">6:30a-2:…</div><div class="t" style="left:1012px;top:108px;font-size:12px;color:#222">6:30a-2:…</div><div class="t" style="left:1092px;top:108px;font-size:12px;color:#222">6:30a-2:…</div><div class="t" style="left:1382px;top:108px;font-size:12px;color:#222">6:30a-2:…</div><div class="t" style="left:1462px;top:108px;font-size:12px;color:#222">6:30a-2:…</div><div class="t" style="left:1542px;top:108px;font-size:12px;color:#222">6:30a-2:…</div><div class="t" style="left:1622px;top:108px;font-size:12px;color:#222">6:30a-2:…</div><div class="t" style="left:1702px;top:108px;font-size:12px;color:#222">6:30a-2:…</div><div class="t" style="left:2px;top:132px;font-size:14px;color:#3a7fc1">Adams, Stephanie</div><div class="t" style="left:152px;top:132px;font-size:14px;color:#222">CNA</div><div class="t" style="left:302px;top:132px;font-size:14px;color:#222">01/06/2019</div><div class="t" style="left:412px;top:132px;font-size:14px;color:#222">6a-2p</div><div class="t" style="left:562px;top:132px;font-size:14px;color:#222">30.00</div><div class="a" style="left:662px;top:132px;width:21px;height:17px;background:#03659b;border-radius:3px"></div><div class="a" style="left:669px;top:142px;width:2px;height:2px;background:#fff"></div><div class="a" style="left:672px;top:142px;width:2px;height:2px;background:#fff"></div><div class="a" style="left:675px;top:142px;width:2px;height:2px;background:#fff"></div><div class="a" style="left:1252px;top:128px;width:45px;height:19px;background:#03659b;border-radius:3px"></div><div class="t" style="left:1252px;top:132px;width:45px;text-align:center;font-size:11px;font-weight:bold;color:#fff">30.00</div><div class="t" style="left:692px;top:133px;font-size:12px;color:#222">7a-3p|Tell</div><div class="t" style="left:772px;top:133px;font-size:12px;color:#222">6:30a-2:…</div><div class="t" style="left:852px;top:133px;font-size:12px;color:#222">6a-2p|Br…</div><div class="t" style="left:1172px;top:133px;font-size:12px;color:#222">6a-2p|Br…</div><div class="t" style="left:1302px;top:133px;font-size:12px;color:#222">7a-3p|Tell</div><div class="t" style="left:1382px;top:133px;font-size:12px;color:#222">6:30a-2:…</div><div class="t" style="left:1462px;top:133px;font-size:12px;color:#222">6a-2p|Br…</div><div class="t" style="left:1782px;top:133px;font-size:12px;color:#222">6a-2p|Br…</div><div class="t" style="left:2px;top:157px;font-size:14px;color:#3a7fc1">Alverez, Jesus</div><div class="t" style="left:152px;top:157px;font-size:14px;color:#222">CNA</div><div class="t" style="left:302px;top:157px;font-size:14px;color:#222">05/05/2019</div><div class="t" style="left:412px;top:157px;font-size:14px;color:#222">6:30a-2:30p</div><div class="t" style="left:562px;top:157px;font-size:14px;color:#222">22.50</div><div class="a" style="left:662px;top:157px;width:21px;height:17px;background:#03659b;border-radius:3px"></div><div class="a" style="left:669px;top:167px;width:2px;height:2px;background:#fff"></div><div class="a" style="left:672px;top:167px;width:2px;height:2px;background:#fff"></div><div class="a" style="left:675px;top:167px;width:2px;height:2px;background:#fff"></div><div class="a" style="left:1252px;top:153px;width:45px;height:19px;background:#03659b;border-radius:3px"></div><div class="t" style="left:1252px;top:157px;width:45px;text-align:center;font-size:11px;font-weight:bold;color:#fff">31.50</div><div class="t" style="left:692px;top:158px;font-size:12px;color:#222">6:30a-2:…</div><div class="t" style="left:852px;top:158px;font-size:12px;color:#222">6a-2p|R…</div><div class="t" style="left:932px;top:158px;font-size:12px;color:#222">10P-7:3…</div><div class="t" style="left:1172px;top:158px;font-size:12px;color:#222">6:30a-2:…</div><div class="t" style="left:1302px;top:158px;font-size:12px;color:#222">6:30a-2:…</div><div class="t" style="left:1462px;top:158px;font-size:12px;color:#222">6a-2p|R…</div><div class="t" style="left:1542px;top:158px;font-size:12px;color:#222">10P-7:3…</div><div class="t" style="left:1782px;top:158px;font-size:12px;color:#222">6:30a-2:…</div><div class="t" style="left:2px;top:182px;font-size:14px;color:#3a7fc1">Avila, Sydney D</div><div class="t" style="left:152px;top:182px;font-size:14px;color:#222">CNA</div><div class="t" style="left:302px;top:182px;font-size:14px;color:#222">06/09/2017</div><div class="t" style="left:412px;top:182px;font-size:14px;color:#222">6a-2p</div><div class="t" style="left:562px;top:182px;font-size:14px;color:#222">37.50</div><div class="a" style="left:662px;top:182px;width:21px;height:17px;background:#03659b;border-radius:3px"></div><div class="a" style="left:669px;top:192px;width:2px;height:2px;background:#fff"></div><div class="a" style="left:672px;top:192px;width:2px;height:2px;background:#fff"></div><div class="a" style="left:675px;top:192px;width:2px;height:2px;background:#fff"></div><div class="a" style="left:1252px;top:178px;width:45px;height:19px;background:#03659b;border-radius:3px"></div><div class="t" style="left:1252px;top:182px;width:45px;text-align:center;font-size:11px;font-weight:bold;color:#fff">37.50</div><div class="t" style="left:772px;top:183px;font-size:12px;color:#222">6a-2p|Tell</div><div class="t" style="left:852px;top:183px;font-size:12px;color:#222">6a-2p|Tell</div><div class="t" style="left:932px;top:183px;font-size:12px;color:#222">6a-2p|Tell</div><div class="t" style="left:1012px;top:183px;font-size:12px;color:#222">6a-2p|Tell</div><div class="t" style="left:1092px;top:183px;font-size:12px;color:#222">6a-2p|Tell</div><div class="t" style="left:1382px;top:183px;font-size:12px;color:#222">6a-2p|Tell</div><div class="t" style="left:1462px;top:183px;font-size:12px;color:#222">6a-2p|Tell</div><div class="t" style="left:1542px;top:183px;font-size:12px;color:#222">6a-2p|Tell</div><div class="t" style="left:1622px;top:183px;font-size:12px;color:#222">6a-2p|Tell</div><div class="t" style="left:1702px;top:183px;font-size:12px;color:#222">6a-2p|Tell</div><div class="t" style="left:2px;top:207px;font-size:14px;color:#3a7fc1">Bangura, Kadiatu</div><div class="t" style="left:152px;top:207px;font-size:14px;color:#222">CNA</div><div class="t" style="left:302px;top:207px;font-size:14px;color:#222">08/28/2017</div><div class="t" style="left:412px;top:207px;font-size:14px;color:#222">2p-10p</div><div class="t" style="left:562px;top:207px;font-size:14px;color:#222">30.00</div><div class="a" style="left:662px;top:207px;width:21px;height:17px;background:#03659b;border-radius:3px"></div><div class="a" style="left:669px;top:217px;width:2px;height:2px;background:#fff"></div><div class="a" style="left:672px;top:217px;width:2px;height:2px;background:#fff"></div><div class="a" style="left:675px;top:217px;width:2px;height:2px;background:#fff"></div><div class="a" style="left:1252px;top:203px;width:45px;height:19px;background:#03659b;border-radius:3px"></div><div class="t" style="left:1252px;top:207px;width:45px;text-align:center;font-size:11px;font-weight:bold;color:#fff">37.50</div><div class="t" style="left:772px;top:208px;font-size:12px;color:#222">6a-2p|R…</div><div class="t" style="left:852px;top:208px;font-size:12px;color:#222">2p-10p|…</div><div class="t" style="left:932px;top:208px;font-size:12px;color:#222">2p-10p|…</div><div class="t" style="left:1012px;top:208px;font-size:12px;color:#222">2p-10p|…</div><div class="t" style="left:1172px;top:208px;font-size:12px;color:#222">2p-10p|…</div><div class="t" style="left:1382px;top:208px;font-size:12px;color:#222">6a-2p|R…</div><div class="t" style="left:1462px;top:208px;font-size:12px;color:#222">2p-10p|…</div><div class="t" style="left:1542px;top:208px;font-size:12px;color:#222">2p-10p|…</div><div class="t" style="left:1622px;top:208px;font-size:12px;color:#222">2p-10p|…</div><div class="t" style="left:2px;top:232px;font-size:14px;color:#3a7fc1">Bolyard, Lindsay</div><div class="t" style="left:152px;top:232px;font-size:14px;color:#222">CNA</div><div class="t" style="left:302px;top:232px;font-size:14px;color:#222">07/11/2017</div><div class="t" style="left:412px;top:232px;font-size:14px;color:#222">6a-2p</div><div class="t" style="left:562px;top:232px;font-size:14px;color:#222">24.00</div><div class="a" style="left:662px;top:232px;width:21px;height:17px;background:#03659b;border-radius:3px"></div><div class="a" style="left:669px;top:242px;width:2px;height:2px;background:#fff"></div><div class="a" style="left:672px;top:242px;width:2px;height:2px;background:#fff"></div><div class="a" style="left:675px;top:242px;width:2px;height:2px;background:#fff"></div><div class="a" style="left:1252px;top:228px;width:45px;height:19px;background:#03659b;border-radius:3px"></div><div class="t" style="left:1252px;top:232px;width:45px;text-align:center;font-size:11px;font-weight:bold;color:#fff">24.00</div><div class="t" style="left:692px;top:233px;font-size:12px;color:#222">6a-2p|FL</div><div class="t" style="left:852px;top:233px;font-size:13px;font-weight:bold;color:#222">NCN</div><div class="t" style="left:932px;top:233px;font-size:12px;color:#222">6:30a-2:…</div><div class="t" style="left:1092px;top:233px;font-size:12px;color:#222">10P-7:3…</div><div class="t" style="left:1302px;top:233px;font-size:12px;color:#222">6a-2p|FL</div><div class="t" style="left:1382px;top:233px;font-size:12px;color:#222">6a-2p|Br…</div><div class="t" style="left:1702px;top:233px;font-size:12px;color:#222">10P-7:3…</div><div class="t" style="left:1782px;top:233px;font-size:13px;font-weight:bold;color:#222">7a-3p|T..</div><div class="t" style="left:2px;top:257px;font-size:14px;color:#3a7fc1">Brown, Manita</div><div class="t" style="left:152px;top:257px;font-size:14px;color:#222">CNA</div><div class="t" style="left:302px;top:257px;font-size:14px;color:#222">09/02/2018</div><div class="t" style="left:562px;top:257px;font-size:14px;color:#222">0</div><div class="a" style="left:662px;top:257px;width:21px;height:17px;background:#03659b;border-radius:3px"></div><div class="a" style="left:669px;top:267px;width:2px;height:2px;background:#fff"></div><div class="a" style="left:672px;top:267px;width:2px;height:2px;background:#fff"></div><div class="a" style="left:675px;top:267px;width:2px;height:2px;background:#fff"></div><div class="a" style="left:1252px;top:253px;width:45px;height:19px;background:#03659b;border-radius:3px"></div><div class="t" style="left:1252px;top:257px;width:45px;text-align:center;font-size:11px;font-weight:bold;color:#fff">0.00</div><div class="t" style="left:2px;top:282px;font-size:14px;color:#3a7fc1">Carmona, Lisa</div><div class="t" style="left:152px;top:282px;font-size:14px;color:#222">CNA</div><div class="t" style="left:302px;top:282px;font-size:14px;color:#222">07/08/2014</div><div class="t" style="left:412px;top:282px;font-size:14px;color:#222">6a-6p</div><div class="t" style="left:562px;top:282px;font-size:14px;color:#222">33.00</div><div class="a" style="left:662px;top:282px;width:21px;height:17px;background:#03659b;border-radius:3px"></div><div class="a" style="left:669px;top:292px;width:2px;height:2px;background:#fff"></div><div class="a" style="left:672px;top:292px;width:2px;height:2px;background:#fff"></div><div class="a" style="left:675px;top:292px;width:2px;height:2px;background:#fff"></div><div class="a" style="left:1252px;top:278px;width:45px;height:19px;background:#03659b;border-radius:3px"></div><div class="t" style="left:1252px;top:282px;width:45px;text-align:center;font-size:11px;font-weight:bold;color:#fff">33.00</div><div class="t" style="left:772px;top:283px;font-size:12px;color:#222">6a-6p|Br…</div><div class="t" style="left:932px;top:283px;font-size:12px;color:#222">6a-6p|Br…</div><div class="t" style="left:1092px;top:283px;font-size:12px;color:#222">6a-6p|Br…</div><div class="t" style="left:1382px;top:283px;font-size:12px;color:#222">6a-6p|Br…</div><div class="t" style="left:1542px;top:283px;font-size:12px;color:#222">6a-6p|Br…</div><div class="t" style="left:1702px;top:283px;font-size:12px;color:#222">6a-6p|Br…</div><div class="t" style="left:2px;top:307px;font-size:14px;color:#3a7fc1">Convery, Joey</div><div class="t" style="left:152px;top:307px;font-size:14px;color:#222">CNA</div><div class="t" style="left:302px;top:307px;font-size:14px;color:#222">05/20/2002</div><div class="t" style="left:412px;top:307px;font-size:14px;color:#222">7a-3p</div><div class="t" style="left:562px;top:307px;font-size:14px;color:#222">37.50</div><div class="a" style="left:662px;top:307px;width:21px;height:17px;background:#03659b;border-radius:3px"></div><div class="a" style="left:669px;top:317px;width:2px;height:2px;background:#fff"></div><div class="a" style="left:672px;top:317px;width:2px;height:2px;background:#fff"></div><div class="a" style="left:675px;top:317px;width:2px;height:2px;background:#fff"></div><div class="a" style="left:1252px;top:303px;width:45px;height:19px;background:#03659b;border-radius:3px"></div><div class="t" style="left:1252px;top:307px;width:45px;text-align:center;font-size:11px;font-weight:bold;color:#fff">22.50</div><div class="t" style="left:692px;top:308px;font-size:12px;color:#222">7a-3p|S…</div><div class="t" style="left:772px;top:308px;font-size:12px;color:#222">7a-3p|S…</div><div class="t" style="left:852px;top:308px;font-size:13px;font-weight:bold;color:#222">PTO</div><div class="t" style="left:932px;top:308px;font-size:12px;color:#222">7a-3p|S…</div><div class="t" style="left:1172px;top:308px;font-size:12px;color:#222">PTO</div><div class="t" style="left:1302px;top:308px;font-size:12px;color:#222">7a-3p|S…</div><div class="t" style="left:1382px;top:308px;font-size:12px;color:#222">7a-3p|S…</div><div class="t" style="left:1462px;top:308px;font-size:12px;color:#222">7a-3p|S…</div><div class="t" style="left:1542px;top:308px;font-size:12px;color:#222">7a-3p|S…</div><div class="t" style="left:1782px;top:308px;font-size:13px;font-weight:bold;color:#222">PTO</div><div class="t" style="left:2px;top:332px;font-size:14px;color:#3a7fc1">Crow, Sally</div><div class="t" style="left:152px;top:332px;font-size:14px;color:#222">CNA</div><div class="t" style="left:302px;top:332px;font-size:14px;color:#222">08/11/2019</div><div class="t" style="left:412px;top:332px;font-size:14px;color:#222">6a-2p</div><div class="t" style="left:562px;top:332px;font-size:14px;color:#222">37.50</div><div class="a" style="left:662px;top:332px;width:21px;height:17px;background:#03659b;border-radius:3px"></div><div class="a" style="left:669px;top:342px;width:2px;height:2px;background:#fff"></div><div class="a" style="left:672px;top:342px;width:2px;height:2px;background:#fff"></div><div class="a" style="left:675px;top:342px;width:2px;height:2px;background:#fff"></div><div class="a" style="left:1252px;top:328px;width:45px;height:19px;background:#03659b;border-radius:3px"></div><div class="t" style="left:1252px;top:332px;width:45px;text-align:center;font-size:11px;font-weight:bold;color:#fff">37.50</div><div class="t" style="left:772px;top:333px;font-size:12px;color:#222">6a-2p|FL</div><div class="t" style="left:852px;top:333px;font-size:12px;color:#222">6a-2p|FL</div><div class="t" style="left:932px;top:333px;font-size:12px;color:#222">6a-2p|FL</div><div class="t" style="left:1012px;top:333px;font-size:12px;color:#222">6a-2p|FL</div><div class="t" style="left:1092px;top:333px;font-size:12px;color:#222">6a-2p|FL</div><div class="t" style="left:1382px;top:333px;font-size:12px;color:#222">6a-2p|FL</div><div class="t" style="left:1462px;top:333px;font-size:12px;color:#222">6a-2p|FL</div><div class="t" style="left:1542px;top:333px;font-size:12px;color:#222">6a-2p|FL</div><div class="t" style="left:1622px;top:333px;font-size:12px;color:#222">6a-2p|FL</div><div class="t" style="left:1702px;top:333px;font-size:12px;color:#222">6a-2p|FL</div><div class="t" style="left:2px;top:357px;font-size:14px;color:#3a7fc1">Davie, Betty</div><div class="t" style="left:152px;top:357px;font-size:14px;color:#222">CNA</div><div class="t" style="left:302px;top:357px;font-size:14px;color:#222">07/14/2019</div><div class="t" style="left:412px;top:357px;font-size:14px;color:#222">10P-7:30A</div><div class="t" style="left:562px;top:357px;font-size:14px;color:#222">36.00</div><div class="a" style="left:662px;top:357px;width:21px;height:17px;background:#03659b;border-radius:3px"></div><div class="a" style="left:669px;top:367px;width:2px;height:2px;background:#fff"></div><div class="a" style="left:672px;top:367px;width:2px;height:2px;background:#fff"></div><div class="a" style="left:675px;top:367px;width:2px;height:2px;background:#fff"></div><div class="a" style="left:1252px;top:353px;width:45px;height:19px;background:#03659b;border-radius:3px"></div><div class="t" style="left:1252px;top:357px;width:45px;text-align:center;font-size:11px;font-weight:bold;color:#fff">36.00</div><div class="t" style="left:692px;top:358px;font-size:12px;color:#222">10P-7:3…</div><div class="t" style="left:772px;top:358px;font-size:12px;color:#222">10P-7:3…</div><div class="t" style="left:1092px;top:358px;font-size:12px;color:#222">10P-7:3…</div><div class="t" style="left:1172px;top:358px;font-size:12px;color:#222">10P-7:3…</div><div class="t" style="left:1302px;top:358px;font-size:12px;color:#222">10P-7:3…</div><div class="t" style="left:1382px;top:358px;font-size:12px;color:#222">10P-7:3…</div><div class="t" style="left:1782px;top:358px;font-size:12px;color:#222">10P-7:3…</div><div class="t" style="left:2px;top:382px;font-size:14px;color:#3a7fc1">Davis, Nicole</div><div class="t" style="left:152px;top:382px;font-size:14px;color:#222">CNA</div><div class="t" style="left:302px;top:382px;font-size:14px;color:#222">07/14/2019</div><div class="t" style="left:412px;top:382px;font-size:14px;color:#222">10P-7:30A</div><div class="t" style="left:562px;top:382px;font-size:14px;color:#222">27.00</div><div class="a" style="left:662px;top:382px;width:21px;height:17px;background:#03659b;border-radius:3px"></div><div class="a" style="left:669px;top:392px;width:2px;height:2px;background:#fff"></div><div class="a" style="left:672px;top:392px;width:2px;height:2px;background:#fff"></div><div class="a" style="left:675px;top:392px;width:2px;height:2px;background:#fff"></div><div class="a" style="left:1252px;top:378px;width:45px;height:19px;background:#03659b;border-radius:3px"></div><div class="t" style="left:1252px;top:382px;width:45px;text-align:center;font-size:11px;font-weight:bold;color:#fff">27.00</div><div class="t" style="left:852px;top:383px;font-size:12px;color:#222">10P-7:3…</div><div class="t" style="left:932px;top:383px;font-size:12px;color:#222">10P-7:3…</div><div class="t" style="left:1012px;top:383px;font-size:12px;color:#222">10P-7:3…</div><div class="t" style="left:1462px;top:383px;font-size:12px;color:#222">10P-7:3…</div><div class="t" style="left:1542px;top:383px;font-size:12px;color:#222">10P-7:3…</div><div class="t" style="left:1622px;top:383px;font-size:12px;color:#222">10P-7:3…</div><div class="t" style="left:2px;top:407px;font-size:14px;color:#3a7fc1">Deere, John</div><div class="t" style="left:152px;top:407px;font-size:14px;color:#222">CNA</div><div class="t" style="left:302px;top:407px;font-size:14px;color:#222">08/04/2019</div><div class="t" style="left:412px;top:407px;font-size:14px;color:#222">2p-10p</div><div class="t" style="left:562px;top:407px;font-size:14px;color:#222">30.00</div><div class="a" style="left:662px;top:407px;width:21px;height:17px;background:#03659b;border-radius:3px"></div><div class="a" style="left:669px;top:417px;width:2px;height:2px;background:#fff"></div><div class="a" style="left:672px;top:417px;width:2px;height:2px;background:#fff"></div><div class="a" style="left:675px;top:417px;width:2px;height:2px;background:#fff"></div><div class="a" style="left:1252px;top:403px;width:45px;height:19px;background:#03659b;border-radius:3px"></div><div class="t" style="left:1252px;top:407px;width:45px;text-align:center;font-size:11px;font-weight:bold;color:#fff">37.50</div><div class="t" style="left:692px;top:408px;font-size:12px;color:#222">2p-10p|…</div><div class="t" style="left:772px;top:408px;font-size:12px;color:#222">3p-11p|Tell</div><div class="t" style="left:852px;top:408px;font-size:13px;font-weight:bold;color:#222">6a-2p|…</div><div class="t" style="left:1092px;top:408px;font-size:12px;color:#222">2p-10p|…</div><div class="t" style="left:1172px;top:408px;font-size:12px;color:#222">2p-10p|…</div><div class="t" style="left:1302px;top:408px;font-size:12px;color:#222">2p-10p|…</div><div class="t" style="left:1382px;top:408px;font-size:12px;color:#222">3p-11p|Tell</div><div class="t" style="left:1702px;top:408px;font-size:12px;color:#222">2p-10p|…</div><div class="t" style="left:1782px;top:408px;font-size:12px;color:#222">2p-10p|…</div><div class="t" style="left:2px;top:432px;font-size:14px;color:#3a7fc1">Dent, Sara</div><div class="t" style="left:152px;top:432px;font-size:14px;color:#222">CNA</div><div class="t" style="left:302px;top:432px;font-size:14px;color:#222">02/02/2017</div><div class="t" style="left:412px;top:432px;font-size:14px;color:#222">10P-7:30A</div><div class="t" style="left:562px;top:432px;font-size:14px;color:#222">36.00</div><div class="a" style="left:662px;top:432px;width:21px;height:17px;background:#03659b;border-radius:3px"></div><div class="a" style="left:669px;top:442px;width:2px;height:2px;background:#fff"></div><div class="a" style="left:672px;top:442px;width:2px;height:2px;background:#fff"></div><div class="a" style="left:675px;top:442px;width:2px;height:2px;background:#fff"></div><div class="a" style="left:1252px;top:428px;width:45px;height:19px;background:#03659b;border-radius:3px"></div><div class="t" style="left:1252px;top:432px;width:45px;text-align:center;font-size:11px;font-weight:bold;color:#fff">36.00</div><div class="t" style="left:692px;top:433px;font-size:12px;color:#222">10P-7:3…</div><div class="t" style="left:772px;top:433px;font-size:12px;color:#222">10P-7:3…</div><div class="t" style="left:1092px;top:433px;font-size:12px;color:#222">10P-7:3…</div><div class="t" style="left:1172px;top:433px;font-size:12px;color:#222">10P-7:3…</div><div class="t" style="left:1302px;top:433px;font-size:12px;color:#222">10P-7:3…</div><div class="t" style="left:1382px;top:433px;font-size:12px;color:#222">10P-7:3…</div><div class="t" style="left:1702px;top:433px;font-size:12px;color:#222">10P-7:3…</div><div class="t" style="left:1782px;top:433px;font-size:12px;color:#222">10P-7:3…</div><div class="t" style="left:2px;top:457px;font-size:14px;color:#3a7fc1">Dodson, Dustin</div><div class="t" style="left:152px;top:457px;font-size:14px;color:#222">CNA</div><div class="t" style="left:302px;top:457px;font-size:14px;color:#222">09/06/2016</div><div class="t" style="left:412px;top:457px;font-size:14px;color:#222">3p-11p</div><div class="t" style="left:562px;top:457px;font-size:14px;color:#222">30.00</div><div class="a" style="left:662px;top:457px;width:21px;height:17px;background:#03659b;border-radius:3px"></div><div class="a" style="left:669px;top:467px;width:2px;height:2px;background:#fff"></div><div class="a" style="left:672px;top:467px;width:2px;height:2px;background:#fff"></div><div class="a" style="left:675px;top:467px;width:2px;height:2px;background:#fff"></div><div class="a" style="left:1252px;top:453px;width:45px;height:19px;background:#03659b;border-radius:3px"></div><div class="t" style="left:1252px;top:457px;width:45px;text-align:center;font-size:11px;font-weight:bold;color:#fff">30.00</div><div class="t" style="left:852px;top:458px;font-size:12px;color:#222">3p-11p|Tell</div><div class="t" style="left:1012px;top:458px;font-size:12px;color:#222">7a-3p|S…</div><div class="t" style="left:1092px;top:458px;font-size:12px;color:#222">7a-3p|Br…</div><div class="t" style="left:1462px;top:458px;font-size:12px;color:#222">3p-11p|Tell</div><div class="t" style="left:1622px;top:458px;font-size:12px;color:#222">7a-3p|S…</div><div class="t" style="left:1702px;top:458px;font-size:12px;color:#222">7a-3p|Br…</div><div class="t" style="left:2px;top:482px;font-size:14px;color:#3a7fc1">Drake, Skye</div><div class="t" style="left:152px;top:482px;font-size:14px;color:#222">CNA</div><div class="t" style="left:302px;top:482px;font-size:14px;color:#222">05/18/2017</div><div class="t" style="left:412px;top:482px;font-size:14px;color:#222">6a-2p</div><div class="t" style="left:562px;top:482px;font-size:14px;color:#222">37.50</div><div class="a" style="left:662px;top:482px;width:21px;height:17px;background:#03659b;border-radius:3px"></div><div class="a" style="left:669px;top:492px;width:2px;height:2px;background:#fff"></div><div class="a" style="left:672px;top:492px;width:2px;height:2px;background:#fff"></div><div class="a" style="left:675px;top:492px;width:2px;height:2px;background:#fff"></div><div class="a" style="left:1252px;top:478px;width:45px;height:19px;background:#03659b;border-radius:3px"></div><div class="t" style="left:1252px;top:482px;width:45px;text-align:center;font-size:11px;font-weight:bold;color:#fff">37.50</div><div class="t" style="left:692px;top:483px;font-size:12px;color:#222">6a-2p|Br…</div><div class="t" style="left:852px;top:483px;font-size:12px;color:#222">6a-2p|Br…</div><div class="t" style="left:932px;top:483px;font-size:12px;color:#222">6a-2p|Br…</div><div class="t" style="left:1012px;top:483px;font-size:12px;color:#222">6a-2p|Br…</div><div class="t" style="left:1172px;top:483px;font-size:12px;color:#222">6a-2p|Br…</div><div class="t" style="left:1302px;top:483px;font-size:12px;color:#222">6a-2p|Br…</div><div class="t" style="left:1462px;top:483px;font-size:12px;color:#222">6a-2p|Br…</div><div class="t" style="left:1542px;top:483px;font-size:12px;color:#222">6a-2p|Br…</div><div class="t" style="left:1622px;top:483px;font-size:12px;color:#222">6a-2p|Br…</div><div class="t" style="left:1782px;top:483px;font-size:12px;color:#222">6a-2p|Br…</div><div class="t" style="left:2px;top:507px;font-size:14px;color:#3a7fc1">EWING, BILLI</div><div class="t" style="left:152px;top:507px;font-size:14px;color:#222">CNA</div><div class="t" style="left:302px;top:507px;font-size:14px;color:#222">01/29/2008</div><div class="t" style="left:412px;top:507px;font-size:14px;color:#222">6a-2p</div><div class="t" style="left:562px;top:507px;font-size:14px;color:#222">37.50</div><div class="a" style="left:662px;top:507px;width:21px;height:17px;background:#03659b;border-radius:3px"></div><div class="a" style="left:669px;top:517px;width:2px;height:2px;background:#fff"></div><div class="a" style="left:672px;top:517px;width:2px;height:2px;background:#fff"></div><div class="a" style="left:675px;top:517px;width:2px;height:2px;background:#fff"></div><div class="a" style="left:1252px;top:503px;width:45px;height:19px;background:#03659b;border-radius:3px"></div><div class="t" style="left:1252px;top:507px;width:45px;text-align:center;font-size:11px;font-weight:bold;color:#fff">37.50</div><div class="t" style="left:772px;top:508px;font-size:12px;color:#222">6a-2p|P…</div><div class="t" style="left:852px;top:508px;font-size:12px;color:#222">6a-2p|P…</div><div class="t" style="left:932px;top:508px;font-size:12px;color:#222">6a-2p|P…</div><div class="t" style="left:1012px;top:508px;font-size:12px;color:#222">6a-2p|P…</div><div class="t" style="left:1092px;top:508px;font-size:12px;color:#222">6a-2p|P…</div><div class="t" style="left:1382px;top:508px;font-size:12px;color:#222">6a-2p|P…</div><div class="t" style="left:1462px;top:508px;font-size:12px;color:#222">6a-2p|P…</div><div class="t" style="left:1542px;top:508px;font-size:12px;color:#222">6a-2p|P…</div><div class="t" style="left:1622px;top:508px;font-size:12px;color:#222">6a-2p|P…</div><div class="t" style="left:1702px;top:508px;font-size:12px;color:#222">6a-2p|P…</div><div class="t" style="left:2px;top:532px;font-size:14px;color:#3a7fc1">Ellis, Jennifer</div><div class="t" style="left:152px;top:532px;font-size:14px;color:#222">CNA</div><div class="t" style="left:302px;top:532px;font-size:14px;color:#222">07/07/2017</div><div class="t" style="left:412px;top:532px;font-size:14px;color:#222">7a-3p</div><div class="t" style="left:562px;top:532px;font-size:14px;color:#222">30.00</div><div class="a" style="left:662px;top:532px;width:21px;height:17px;background:#03659b;border-radius:3px"></div><div class="a" style="left:669px;top:542px;width:2px;height:2px;background:#fff"></div><div class="a" style="left:672px;top:542px;width:2px;height:2px;background:#fff"></div><div class="a" style="left:675px;top:542px;width:2px;height:2px;background:#fff"></div><div class="a" style="left:1252px;top:528px;width:45px;height:19px;background:#03659b;border-radius:3px"></div><div class="t" style="left:1252px;top:532px;width:45px;text-align:center;font-size:11px;font-weight:bold;color:#fff">30.00</div><div class="t" style="left:692px;top:533px;font-size:12px;color:#222">7a-3p|Br…</div><div class="t" style="left:772px;top:533px;font-size:12px;color:#222">7a-3p|Br…</div><div class="t" style="left:932px;top:533px;font-size:12px;color:#222">7a-3p|Br…</div><div class="t" style="left:1172px;top:533px;font-size:12px;color:#222">7a-3p|Br…</div><div class="t" style="left:1302px;top:533px;font-size:12px;color:#222">7a-3p|Br…</div><div class="t" style="left:1382px;top:533px;font-size:12px;color:#222">7a-3p|Br…</div><div class="t" style="left:1542px;top:533px;font-size:12px;color:#222">7a-3p|Br…</div><div class="t" style="left:1782px;top:533px;font-size:12px;color:#222">7a-3p|Br…</div><div class="t" style="left:2px;top:557px;font-size:14px;color:#3a7fc1">Enis, Melissa</div><div class="t" style="left:152px;top:557px;font-size:14px;color:#222">CNA</div><div class="t" style="left:302px;top:557px;font-size:14px;color:#222">06/09/2019</div><div class="t" style="left:412px;top:557px;font-size:14px;color:#222">2p-10p</div><div class="t" style="left:562px;top:557px;font-size:14px;color:#222">37.50</div><div class="a" style="left:662px;top:557px;width:21px;height:17px;background:#03659b;border-radius:3px"></div><div class="a" style="left:669px;top:567px;width:2px;height:2px;background:#fff"></div><div class="a" style="left:672px;top:567px;width:2px;height:2px;background:#fff"></div><div class="a" style="left:675px;top:567px;width:2px;height:2px;background:#fff"></div><div class="a" style="left:1252px;top:553px;width:45px;height:19px;background:#03659b;border-radius:3px"></div><div class="t" style="left:1252px;top:557px;width:45px;text-align:center;font-size:11px;font-weight:bold;color:#fff">37.50</div><div class="t" style="left:772px;top:558px;font-size:12px;color:#222">2p-10p|…</div><div class="t" style="left:852px;top:558px;font-size:12px;color:#222">2p-10p|…</div><div class="t" style="left:932px;top:558px;font-size:12px;color:#222">2p-10p|…</div><div class="t" style="left:1012px;top:558px;font-size:12px;color:#222">2p-10p|…</div><div class="t" style="left:1092px;top:558px;font-size:12px;color:#222">2p-10p|…</div><div class="t" style="left:1382px;top:558px;font-size:12px;color:#222">2p-10p|…</div><div class="t" style="left:1462px;top:558px;font-size:12px;color:#222">2p-10p|…</div><div class="t" style="left:1542px;top:558px;font-size:12px;color:#222">2p-10p|…</div><div class="t" style="left:1622px;top:558px;font-size:12px;color:#222">2p-10p|…</div><div class="t" style="left:1702px;top:558px;font-size:12px;color:#222">2p-10p|…</div><div class="t" style="left:2px;top:582px;font-size:14px;color:#3a7fc1">Focus, Jennifer</div><div class="t" style="left:152px;top:582px;font-size:14px;color:#222">CNA</div><div class="t" style="left:302px;top:582px;font-size:14px;color:#222">10/06/2019</div><div class="t" style="left:412px;top:582px;font-size:14px;color:#222">6a-6p</div><div class="t" style="left:562px;top:582px;font-size:14px;color:#222">33.00</div><div class="a" style="left:662px;top:582px;width:21px;height:17px;background:#03659b;border-radius:3px"></div><div class="a" style="left:669px;top:592px;width:2px;height:2px;background:#fff"></div><div class="a" style="left:672px;top:592px;width:2px;height:2px;background:#fff"></div><div class="a" style="left:675px;top:592px;width:2px;height:2px;background:#fff"></div><div class="a" style="left:1252px;top:578px;width:45px;height:19px;background:#03659b;border-radius:3px"></div><div class="t" style="left:1252px;top:582px;width:45px;text-align:center;font-size:11px;font-weight:bold;color:#fff">33.00</div><div class="t" style="left:692px;top:583px;font-size:12px;color:#222">6a-6p|Br…</div><div class="t" style="left:852px;top:583px;font-size:12px;color:#222">6a-6p|Br…</div><div class="t" style="left:1012px;top:583px;font-size:12px;color:#222">6a-6p|Br…</div><div class="t" style="left:1302px;top:583px;font-size:12px;color:#222">6a-6p|Br…</div><div class="t" style="left:1462px;top:583px;font-size:12px;color:#222">6a-6p|Br…</div><div class="t" style="left:1622px;top:583px;font-size:12px;color:#222">6a-6p|Br…</div><div class="t" style="left:2px;top:607px;font-size:14px;color:#3a7fc1">Green, Martha</div><div class="t" style="left:152px;top:607px;font-size:14px;color:#222">CNA</div><div class="t" style="left:302px;top:607px;font-size:14px;color:#222">02/17/2019</div><div class="t" style="left:412px;top:607px;font-size:14px;color:#222">7a-3p</div><div class="t" style="left:562px;top:607px;font-size:14px;color:#222">15.00</div><div class="a" style="left:662px;top:607px;width:21px;height:17px;background:#03659b;border-radius:3px"></div><div class="a" style="left:669px;top:617px;width:2px;height:2px;background:#fff"></div><div class="a" style="left:672px;top:617px;width:2px;height:2px;background:#fff"></div><div class="a" style="left:675px;top:617px;width:2px;height:2px;background:#fff"></div><div class="a" style="left:1252px;top:603px;width:45px;height:19px;background:#03659b;border-radius:3px"></div><div class="t" style="left:1252px;top:607px;width:45px;text-align:center;font-size:11px;font-weight:bold;color:#fff">15.00</div><div class="t" style="left:1092px;top:608px;font-size:12px;color:#222">7a-3p|S…</div><div class="t" style="left:1172px;top:608px;font-size:12px;color:#222">7a-3p|S…</div><div class="t" style="left:1702px;top:608px;font-size:12px;color:#222">7a-3p|S…</div><div class="t" style="left:1782px;top:608px;font-size:12px;color:#222">7a-3p|S…</div><div class="a" style="left:1141px;top:78px;width:8px;height:8px;background:#127a36;border-radius:50%"></div><div class="a" style="left:1150px;top:78px;width:8px;height:8px;background:#1747c8;border-radius:50%"></div><div class="a" style="left:1159px;top:78px;width:8px;height:8px;background:#000;border-radius:50%"></div><div class="a" style="left:132px;top:251px;width:8px;height:8px;background:#f28b2c;border-radius:50%"></div><div class="a" style="left:141px;top:251px;width:8px;height:8px;background:#1745c4;border-radius:50%"></div><div class="a" style="left:919px;top:228px;width:8px;height:8px;background:#7fe01e;border-radius:50%"></div><div class="a" style="left:919px;top:303px;width:8px;height:8px;background:#7fe01e;border-radius:50%"></div><div class="a" style="left:1079px;top:453px;width:8px;height:8px;background:#0a7a30;border-radius:50%"></div><div class="a" style="left:1689px;top:453px;width:8px;height:8px;background:#0a7a30;border-radius:50%"></div><div class="a" style="left:-1px;top:626px;width:1846px;height:2px;background:#a9a9a9"></div><div class="a" style="left:-1px;top:628px;width:1846px;height:23px;background:#505050"></div><div class="a" style="left:-1px;top:651px;width:1846px;height:1px;background:#bdbdbd"></div><div class="a" style="left:-1px;top:652px;width:1846px;height:25px;background:#fff"></div><div class="a" style="left:-1px;top:677px;width:1846px;height:25px;background:#dcdcdc"></div><div class="a" style="left:-1px;top:702px;width:1846px;height:25px;background:#fff"></div><div class="a" style="left:-1px;top:727px;width:1846px;height:25px;background:#dcdcdc"></div><div class="a" style="left:-1px;top:752px;width:1846px;height:25px;background:#fff"></div><div class="a" style="left:-1px;top:777px;width:1846px;height:25px;background:#dcdcdc"></div><div class="a" style="left:149px;top:628px;width:1px;height:174px;border-left:1px dotted #c2c2c2"></div><div class="a" style="left:299px;top:628px;width:1px;height:174px;border-left:1px dotted #c2c2c2"></div><div class="a" style="left:409px;top:628px;width:1px;height:174px;border-left:1px dotted #c2c2c2"></div><div class="a" style="left:559px;top:628px;width:1px;height:174px;border-left:1px dotted #c2c2c2"></div><div class="a" style="left:659px;top:628px;width:1px;height:174px;border-left:1px dotted #c2c2c2"></div><div class="a" style="left:689px;top:628px;width:1px;height:174px;background:#a8a8a8"></div><div class="a" style="left:769px;top:628px;width:1px;height:174px;border-left:1px dotted #c2c2c2"></div><div class="a" style="left:849px;top:628px;width:1px;height:174px;border-left:1px dotted #c2c2c2"></div><div class="a" style="left:929px;top:628px;width:1px;height:174px;border-left:1px dotted #c2c2c2"></div><div class="a" style="left:1009px;top:628px;width:1px;height:174px;border-left:1px dotted #c2c2c2"></div><div class="a" style="left:1089px;top:628px;width:1px;height:174px;border-left:1px dotted #c2c2c2"></div><div class="a" style="left:1169px;top:628px;width:1px;height:174px;border-left:1px dotted #c2c2c2"></div><div class="a" style="left:1249px;top:628px;width:1px;height:174px;border-left:1px dotted #c2c2c2"></div><div class="a" style="left:1299px;top:628px;width:1px;height:174px;border-left:1px dotted #c2c2c2"></div><div class="a" style="left:1379px;top:628px;width:1px;height:174px;border-left:1px dotted #c2c2c2"></div><div class="a" style="left:1459px;top:628px;width:1px;height:174px;border-left:1px dotted #c2c2c2"></div><div class="a" style="left:1539px;top:628px;width:1px;height:174px;border-left:1px dotted #c2c2c2"></div><div class="a" style="left:1619px;top:628px;width:1px;height:174px;border-left:1px dotted #c2c2c2"></div><div class="a" style="left:1699px;top:628px;width:1px;height:174px;border-left:1px dotted #c2c2c2"></div><div class="a" style="left:1779px;top:628px;width:1px;height:174px;border-left:1px dotted #c2c2c2"></div><div class="t" style="left:2px;top:636px;font-size:14px;font-weight:bold;color:#fff">Total</div><div class="t" style="left:689px;top:636px;width:78px;text-align:right;font-size:14px;font-weight:bold;color:#fff;">327.50</div><div class="t" style="left:769px;top:636px;width:78px;text-align:right;font-size:14px;font-weight:bold;color:#fff;">373.50</div><div class="t" style="left:849px;top:636px;width:78px;text-align:right;font-size:14px;font-weight:bold;color:#fff;">369.50</div><div class="t" style="left:929px;top:636px;width:78px;text-align:right;font-size:14px;font-weight:bold;color:#fff;">366.00</div><div class="t" style="left:1009px;top:636px;width:78px;text-align:right;font-size:14px;font-weight:bold;color:#fff;">377.50</div><div class="t" style="left:1089px;top:636px;width:78px;text-align:right;font-size:14px;font-weight:bold;color:#fff;">366.00</div><div class="t" style="left:1169px;top:636px;width:78px;text-align:right;font-size:14px;font-weight:bold;color:#fff;">342.50</div><div class="t" style="left:1299px;top:636px;width:78px;text-align:right;font-size:14px;font-weight:bold;color:#fff;">327.50</div><div class="t" style="left:1379px;top:636px;width:78px;text-align:right;font-size:14px;font-weight:bold;color:#fff;">372.00</div><div class="t" style="left:1459px;top:636px;width:78px;text-align:right;font-size:14px;font-weight:bold;color:#fff;">369.50</div><div class="t" style="left:1539px;top:636px;width:78px;text-align:right;font-size:14px;font-weight:bold;color:#fff;">366.00</div><div class="t" style="left:1619px;top:636px;width:78px;text-align:right;font-size:14px;font-weight:bold;color:#fff;">377.50</div><div class="t" style="left:1699px;top:636px;width:78px;text-align:right;font-size:14px;font-weight:bold;color:#fff;">373.50</div><div class="t" style="left:1779px;top:636px;width:78px;text-align:right;font-size:14px;font-weight:bold;color:#fff;">342.50</div><div class="t" style="left:2px;top:659px;font-size:14px;font-weight:bold;color:#111">PAR Levels / Ideal …</div><div class="t" style="left:689px;top:659px;width:78px;text-align:right;font-size:14px;color:#111;color:#333">335.50</div><div class="t" style="left:769px;top:659px;width:78px;text-align:right;font-size:14px;color:#111;color:#333">373.50</div><div class="t" style="left:849px;top:659px;width:78px;text-align:right;font-size:14px;color:#111;color:#333">381.00</div><div class="t" style="left:929px;top:659px;width:78px;text-align:right;font-size:14px;color:#111;color:#333">373.50</div><div class="t" style="left:1009px;top:659px;width:78px;text-align:right;font-size:14px;color:#111;color:#333">373.50</div><div class="t" style="left:1089px;top:659px;width:78px;text-align:right;font-size:14px;color:#111;color:#333">373.50</div><div class="t" style="left:1169px;top:659px;width:78px;text-align:right;font-size:14px;color:#111;color:#333">343.00</div><div class="t" style="left:1299px;top:659px;width:78px;text-align:right;font-size:14px;color:#111;color:#333">335.50</div><div class="t" style="left:1379px;top:659px;width:78px;text-align:right;font-size:14px;color:#111;color:#333">373.50</div><div class="t" style="left:1459px;top:659px;width:78px;text-align:right;font-size:14px;color:#111;color:#333">381.00</div><div class="t" style="left:1539px;top:659px;width:78px;text-align:right;font-size:14px;color:#111;color:#333">373.50</div><div class="t" style="left:1619px;top:659px;width:78px;text-align:right;font-size:14px;color:#111;color:#333">373.50</div><div class="t" style="left:1699px;top:659px;width:78px;text-align:right;font-size:14px;color:#111;color:#333">373.50</div><div class="t" style="left:1779px;top:659px;width:78px;text-align:right;font-size:14px;color:#111;color:#333">343.00</div><div class="t" style="left:2px;top:684px;font-size:14px;font-weight:bold;color:#111">Open Shifts</div><div class="t" style="left:689px;top:684px;width:78px;text-align:right;font-size:14px;color:#111;color:#333">1.00</div><div class="t" style="left:769px;top:684px;width:78px;text-align:right;font-size:14px;color:#111;color:#333">0.00</div><div class="t" style="left:849px;top:684px;width:78px;text-align:right;font-size:14px;color:#111;color:#333">1.00</div><div class="t" style="left:929px;top:684px;width:78px;text-align:right;font-size:14px;color:#111;color:#333">1.00</div><div class="t" style="left:1009px;top:684px;width:78px;text-align:right;font-size:14px;color:#111;color:#333">0.00</div><div class="t" style="left:1089px;top:684px;width:78px;text-align:right;font-size:14px;color:#111;color:#333">1.00</div><div class="t" style="left:1169px;top:684px;width:78px;text-align:right;font-size:14px;color:#111;color:#333">0.00</div><div class="t" style="left:1299px;top:684px;width:78px;text-align:right;font-size:14px;color:#111;color:#333">1.00</div><div class="t" style="left:1379px;top:684px;width:78px;text-align:right;font-size:14px;color:#111;color:#333">0.00</div><div class="t" style="left:1459px;top:684px;width:78px;text-align:right;font-size:14px;color:#111;color:#333">1.00</div><div class="t" style="left:1539px;top:684px;width:78px;text-align:right;font-size:14px;color:#111;color:#333">1.00</div><div class="t" style="left:1619px;top:684px;width:78px;text-align:right;font-size:14px;color:#111;color:#333">0.00</div><div class="t" style="left:1699px;top:684px;width:78px;text-align:right;font-size:14px;color:#111;color:#333">0.00</div><div class="t" style="left:1779px;top:684px;width:78px;text-align:right;font-size:14px;color:#111;color:#333">0.00</div><div class="t" style="left:2px;top:709px;font-size:14px;font-weight:bold;color:#111">Difference</div><div class="t" style="left:689px;top:709px;width:78px;text-align:right;font-size:14px;color:#111;color:#333">8.00</div><div class="t" style="left:769px;top:709px;width:78px;text-align:right;font-size:14px;color:#111;color:#333">0.00</div><div class="t" style="left:849px;top:709px;width:78px;text-align:right;font-size:14px;color:#111;color:#333">11.50</div><div class="t" style="left:929px;top:709px;width:78px;text-align:right;font-size:14px;color:#111;color:#333">7.50</div><div class="t" style="left:1009px;top:709px;width:78px;text-align:right;font-size:14px;color:#111;color:#333">4.00</div><div class="t" style="left:1089px;top:709px;width:78px;text-align:right;font-size:14px;color:#111;color:#333">7.50</div><div class="t" style="left:1169px;top:709px;width:78px;text-align:right;font-size:14px;color:#111;color:#333">0.50</div><div class="t" style="left:1299px;top:709px;width:78px;text-align:right;font-size:14px;color:#111;color:#333">8.00</div><div class="t" style="left:1379px;top:709px;width:78px;text-align:right;font-size:14px;color:#111;color:#333">1.50</div><div class="t" style="left:1459px;top:709px;width:78px;text-align:right;font-size:14px;color:#111;color:#333">11.50</div><div class="t" style="left:1539px;top:709px;width:78px;text-align:right;font-size:14px;color:#111;color:#333">7.50</div><div class="t" style="left:1619px;top:709px;width:78px;text-align:right;font-size:14px;color:#111;color:#333">4.00</div><div class="t" style="left:1699px;top:709px;width:78px;text-align:right;font-size:14px;color:#111;color:#333">0.00</div><div class="t" style="left:1779px;top:709px;width:78px;text-align:right;font-size:14px;color:#111;color:#333">0.50</div><div class="t" style="left:2px;top:734px;font-size:14px;font-weight:bold;color:#111">Census</div><div class="t" style="left:689px;top:734px;width:78px;text-align:right;font-size:14px;color:#111;color:#333">69.00</div><div class="t" style="left:769px;top:734px;width:78px;text-align:right;font-size:14px;color:#111;color:#333">69.00</div><div class="t" style="left:849px;top:734px;width:78px;text-align:right;font-size:14px;color:#111;color:#333">69.00</div><div class="t" style="left:929px;top:734px;width:78px;text-align:right;font-size:14px;color:#111;color:#333">69.00</div><div class="t" style="left:1009px;top:734px;width:78px;text-align:right;font-size:14px;color:#111;color:#333">69.00</div><div class="t" style="left:1089px;top:734px;width:78px;text-align:right;font-size:14px;color:#111;color:#333">69.00</div><div class="t" style="left:1169px;top:734px;width:78px;text-align:right;font-size:14px;color:#111;color:#333">69.00</div><div class="t" style="left:1299px;top:734px;width:78px;text-align:right;font-size:14px;color:#111;color:#333">69.00</div><div class="t" style="left:1379px;top:734px;width:78px;text-align:right;font-size:14px;color:#111;color:#333">69.00</div><div class="t" style="left:1459px;top:734px;width:78px;text-align:right;font-size:14px;color:#111;color:#333">69.00</div><div class="t" style="left:1539px;top:734px;width:78px;text-align:right;font-size:14px;color:#111;color:#333">69.00</div><div class="t" style="left:1619px;top:734px;width:78px;text-align:right;font-size:14px;color:#111;color:#333">69.00</div><div class="t" style="left:1699px;top:734px;width:78px;text-align:right;font-size:14px;color:#111;color:#333">69.00</div><div class="t" style="left:1779px;top:734px;width:78px;text-align:right;font-size:14px;color:#111;color:#333">69.00</div><div class="t" style="left:2px;top:759px;font-size:14px;font-weight:bold;color:#111">Staffing Ratio</div><div class="t" style="left:689px;top:759px;width:78px;text-align:right;font-size:14px;color:#111;color:#333">0.21</div><div class="t" style="left:769px;top:759px;width:78px;text-align:right;font-size:14px;color:#111;color:#333">0.18</div><div class="t" style="left:849px;top:759px;width:78px;text-align:right;font-size:14px;color:#111;color:#333">0.19</div><div class="t" style="left:929px;top:759px;width:78px;text-align:right;font-size:14px;color:#111;color:#333">0.19</div><div class="t" style="left:1009px;top:759px;width:78px;text-align:right;font-size:14px;color:#111;color:#333">0.18</div><div class="t" style="left:1089px;top:759px;width:78px;text-align:right;font-size:14px;color:#111;color:#333">0.19</div><div class="t" style="left:1169px;top:759px;width:78px;text-align:right;font-size:14px;color:#111;color:#333">0.20</div><div class="t" style="left:1299px;top:759px;width:78px;text-align:right;font-size:14px;color:#111;color:#333">0.21</div><div class="t" style="left:1379px;top:759px;width:78px;text-align:right;font-size:14px;color:#111;color:#333">0.19</div><div class="t" style="left:1459px;top:759px;width:78px;text-align:right;font-size:14px;color:#111;color:#333">0.19</div><div class="t" style="left:1539px;top:759px;width:78px;text-align:right;font-size:14px;color:#111;color:#333">0.19</div><div class="t" style="left:1619px;top:759px;width:78px;text-align:right;font-size:14px;color:#111;color:#333">0.18</div><div class="t" style="left:1699px;top:759px;width:78px;text-align:right;font-size:14px;color:#111;color:#333">0.18</div><div class="t" style="left:1779px;top:759px;width:78px;text-align:right;font-size:14px;color:#111;color:#333">0.20</div><div class="t" style="left:2px;top:784px;font-size:14px;font-weight:bold;color:#111">Actual Hours</div><div class="t" style="left:689px;top:784px;width:78px;text-align:right;font-size:14px;color:#111;color:#333">320.00</div><div class="t" style="left:769px;top:784px;width:78px;text-align:right;font-size:14px;color:#111;color:#333">375.25</div><div class="t" style="left:849px;top:784px;width:78px;text-align:right;font-size:14px;color:#111;color:#333">378.25</div><div class="t" style="left:929px;top:784px;width:78px;text-align:right;font-size:14px;color:#111;color:#333">357.25</div><div class="t" style="left:1009px;top:784px;width:78px;text-align:right;font-size:14px;color:#111;color:#333">366.25</div><div class="t" style="left:1089px;top:784px;width:78px;text-align:right;font-size:14px;color:#111;color:#333">370.75</div><div class="t" style="left:1169px;top:784px;width:78px;text-align:right;font-size:14px;color:#111;color:#333">329.75</div><div class="t" style="left:1299px;top:784px;width:78px;text-align:right;font-size:14px;color:#111;color:#333">332.25</div><div class="t" style="left:1379px;top:784px;width:78px;text-align:right;font-size:14px;color:#111;color:#333">390.75</div><div class="t" style="left:1459px;top:784px;width:78px;text-align:right;font-size:14px;color:#111;color:#333">371.25</div><div class="t" style="left:1539px;top:784px;width:78px;text-align:right;font-size:14px;color:#111;color:#333">356.25</div><div class="t" style="left:1619px;top:784px;width:78px;text-align:right;font-size:14px;color:#111;color:#333">378.00</div><div class="t" style="left:1699px;top:784px;width:78px;text-align:right;font-size:14px;color:#111;color:#333">378.25</div><div class="t" style="left:1779px;top:784px;width:78px;text-align:right;font-size:14px;color:#111;color:#333">341.75</div><div class="a" style="left:690px;top:802px;width:539px;height:7px;background:#808080;border-radius:3.5px"></div></div><svg style="left:1855px;top:975px" width="60" height="60"><defs><filter id="hs" x="-20%" y="-20%" width="140%" height="140%"><feGaussianBlur stdDeviation="1.5"/></filter></defs><circle cx="30" cy="31" r="24" fill="none" stroke="rgba(0,0,0,0.12)" stroke-width="4" filter="url(#hs)"/><circle cx="30" cy="30" r="22.8" fill="none" stroke="#fff" stroke-width="3.6"/></svg><svg style="left:1864px;top:984px;opacity:0.8" width="44" height="44"><path d="M21 0A21 21 0 1 0 33.5 37.5L41 41L38.5 32A21 21 0 0 0 21 0Z" fill="#2ea6d9"/><path d="M0 21A21 21 0 0 0 33.5 37.5L41 41L38.5 32Q40.5 27 42 21Z" fill="#259bcf"/></svg><div class="t" style="left:1876px;top:987px;font-size:36px;font-weight:bold;color:#fff;transform:scaleX(0.85);transform-origin:0 0">?</div></body></html>
